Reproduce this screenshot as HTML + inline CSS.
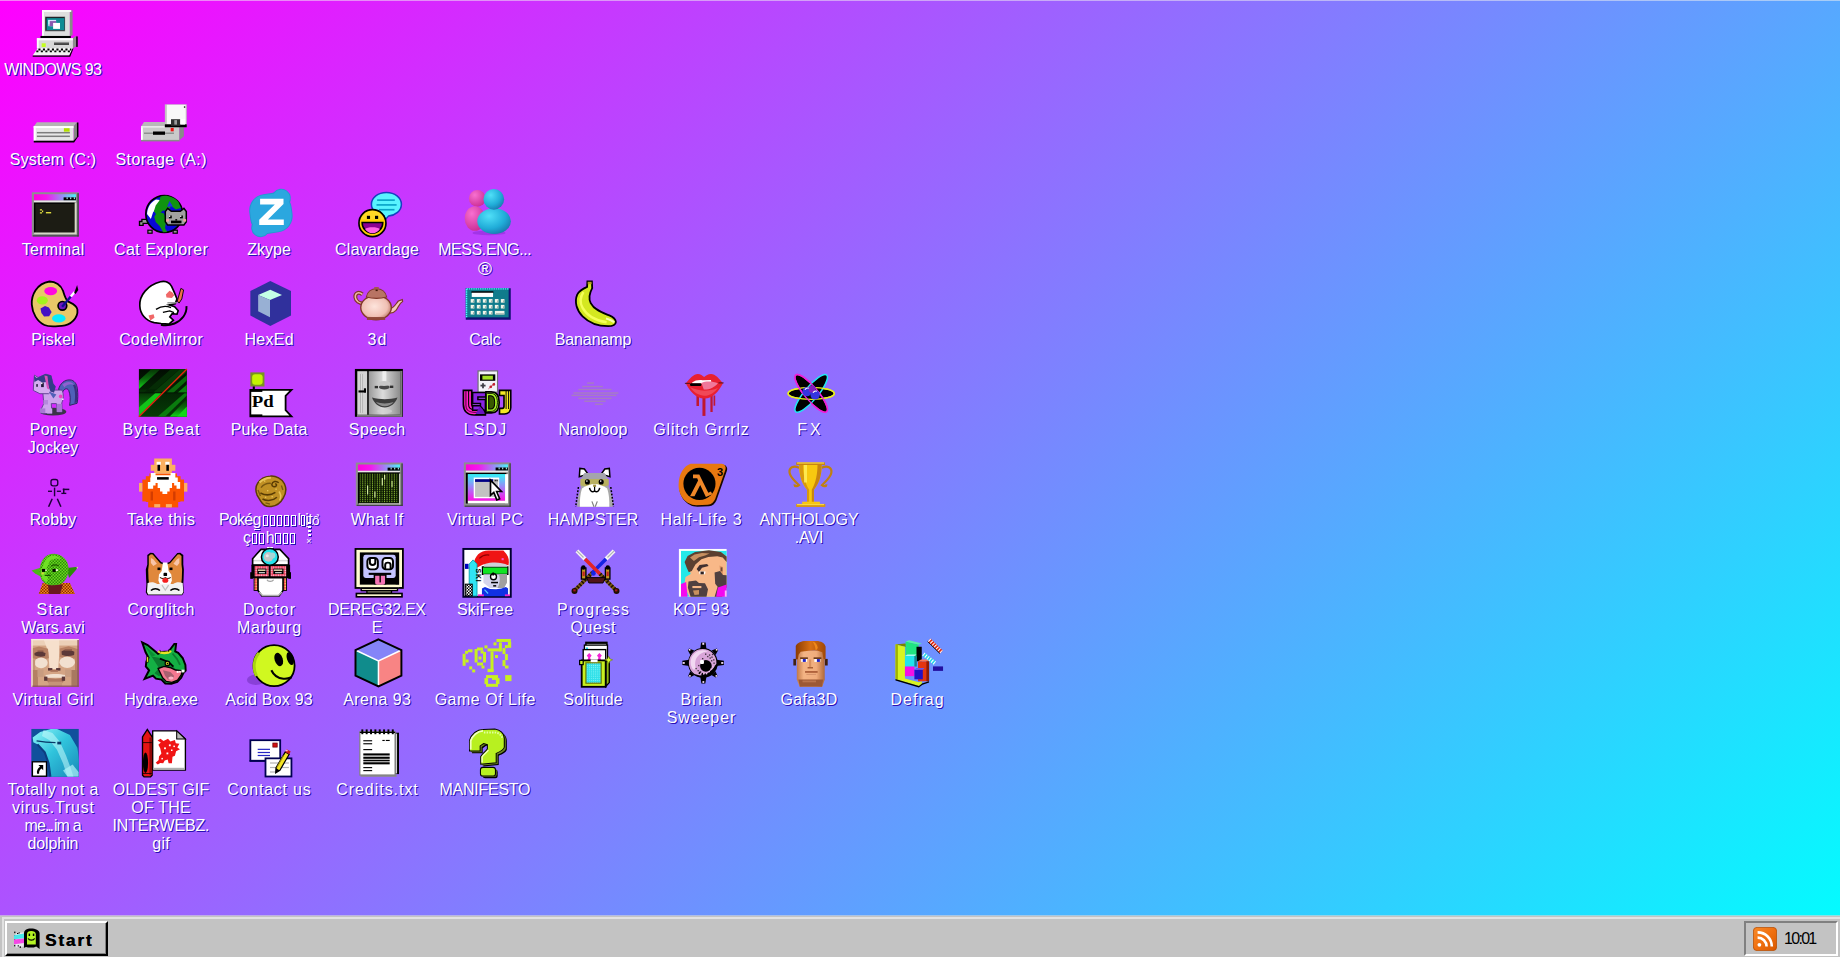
<!DOCTYPE html><html><head><meta charset="utf-8"><title>WINDOWS 93</title><style>

*{margin:0;padding:0;box-sizing:border-box}
html,body{width:1840px;height:957px;overflow:hidden;background:#c0c0c0}
body{font-family:"Liberation Sans",sans-serif;position:relative}
#desk{position:absolute;left:0;top:0;width:1840px;height:916px;background:linear-gradient(135deg,#ff00ff 0%,#00ffff 100%) 0 0/1840px 957px no-repeat;overflow:hidden}
#topline{position:absolute;left:0;top:0;width:1840px;height:1px;background:rgba(240,240,240,.52)}
.ic{position:absolute;width:108px;height:90px}
.ic svg{position:absolute;left:30px;top:10px;width:48px;height:48px;overflow:visible}
.ic .t{position:absolute;left:-21px;width:148px;top:61px;text-align:center;color:#fff;font-size:16px;line-height:18px;white-space:nowrap;text-shadow:1px 1px 0 #2a10b4}
.ic .t span.l{display:block;height:18px}
.z{letter-spacing:0}
.bx{display:inline-block;border:1px solid #fff;box-shadow:1px 1px 0 #2a10b4, inset 1px 1px 0 #2a10b4;vertical-align:-1px}
.u{position:relative}.u:after{content:'';position:absolute;left:1px;right:1px;bottom:-2px;height:1px;background:#fff;box-shadow:1px 1px 0 #2a10b4}.zs{position:absolute;left:112px;top:11px;width:5px}.zs i{display:block;width:3px;height:2px;margin:0 0 2px 1px;background:#fff;box-shadow:1px 1px 0 #2a10b4}.zs b{display:block;font-size:9px;line-height:7px;font-weight:normal;margin-left:-1px}
#bar{position:absolute;left:0;top:915px;width:1840px;height:42px;background:linear-gradient(#c3c3c3,#c3c3c3) 0 1px/100% 41px no-repeat}
#bar .l1{position:absolute;left:0;top:0;width:1840px;height:1px;background:rgba(214,214,214,.62)}
#bar .l2{position:absolute;left:2px;top:2px;width:1838px;height:2px;background:#e2e2e2}
#bar .l3{position:absolute;left:2px;top:2px;width:2px;height:40px;background:#e2e2e2}
#start{position:absolute;left:5px;top:6px;width:103px;height:35px;background:#c3c3c3;border-style:solid;border-width:2px;border-color:#fff #000 #000 #fff;box-shadow:inset -1px -1px 0 #808080}
#start svg{position:absolute;left:6px;top:4px;width:28px;height:24px}
#start b{text-shadow:.5px 0 0 #000;position:absolute;left:38px;top:8px;font-size:17px;line-height:20px;color:#000;letter-spacing:1.9px;font-weight:bold}
#tray{position:absolute;left:1744px;top:6px;width:94px;height:35px;border-style:solid;border-width:2px;border-color:#808080 #fff #fff #808080}
#tray svg{position:absolute;left:7px;top:4px;width:24px;height:24px}
#tray span{position:absolute;left:38px;top:7px;font-size:16px;line-height:18px;color:#000;letter-spacing:-1.7px}

</style></head><body>
<div id="desk">
<div class="ic" style="left:0px;top:0px"><svg viewBox="0 0 32 32"><polygon points="26.3,1 28.4,0 28.4,16.6 26.3,17.6" fill="#8a8a8a"/><rect x="8" y="0.3" width="18.5" height="17.2" fill="#dedede"/><rect x="8" y="0" width="19.5" height="1.3" fill="#fafafa"/><rect x="8" y="0.3" width="1.3" height="17" fill="#fafafa"/><rect x="10" y="4.4" width="13.4" height="9.8" fill="#6a6a6a"/><rect x="10.4" y="4.8" width="12.6" height="8.8" fill="#101018"/><rect x="11" y="5.4" width="11.9" height="8" fill="#0e8c94"/><rect x="12.2" y="6.6" width="5.2" height="4.2" fill="#d6e2ff"/><rect x="13" y="7.4" width="4.4" height="3.4" fill="#8a5ab0"/><rect x="15.4" y="8.6" width="4.6" height="4" fill="#ffffff"/><rect x="12.2" y="6.6" width="0.8" height="3" fill="#bff"/><rect x="7" y="17.3" width="20.2" height="1.5" fill="#000"/><polygon points="28.6,18.8 30.8,17.2 30.8,24.2 28.6,25.6" fill="#8c8c8c"/><rect x="30.8" y="17.6" width="1" height="7" fill="#000"/><rect x="4.6" y="18.8" width="24" height="6.8" fill="#d8d8d8"/><rect x="4.6" y="18.8" width="24" height="1.4" fill="#fbfbfb"/><rect x="4.6" y="18.8" width="1.2" height="6.8" fill="#fbfbfb"/><rect x="7.8" y="22.2" width="2.7" height="2.5" fill="#c4ff20"/><rect x="16" y="21.3" width="10" height="0.9" fill="#909090"/><rect x="16" y="22.2" width="10" height="1" fill="#202020"/><polygon points="5.2,25.4 28.4,25.4 26.2,30.4 1.8,30.4" fill="#f2f2f2"/><path d="M5.6 26.3H27.6" stroke="#000" stroke-width="1.3" stroke-dasharray="1.4 1.6"/><path d="M4.2 27.6H26.6" stroke="#000" stroke-width="1.2" stroke-dasharray="1.4 1.6"/><polygon points="1.8,30.4 26.2,30.4 28.4,25.6 29,25.6 26.8,31.1 1.8,31.1" fill="#000"/></svg><div class="t"><span class="l"><span id="L0_0" style="letter-spacing:-0.60px;margin-right:0.60px">WINDOWS 93</span></span></div></div>
<div class="ic" style="left:0px;top:90px"><svg viewBox="0 0 32 32"><polygon points="4.6,14.9 31.4,14.9 29,17.6 2.5,17.6" fill="#b4b4b4"/><polygon points="29,17.6 31.4,14.9 31.4,24.6 29,27.2" fill="#868686"/><rect x="31.3" y="15" width="1" height="9.6" fill="#000"/><rect x="2.5" y="17.4" width="26.5" height="9.8" fill="#e6e6e6"/><rect x="2.5" y="17.4" width="26.5" height="1.3" fill="#fff"/><rect x="2.5" y="17.4" width="1.3" height="9.8" fill="#fff"/><rect x="4.6" y="21.3" width="22" height="1" fill="#7c7c7c"/><rect x="4.6" y="23.7" width="22" height="1" fill="#7c7c7c"/><rect x="22.6" y="18.8" width="3.8" height="2.3" fill="#b4e000"/><polygon points="2.5,27.2 29,27.2 31.6,24.4 32.2,24.4 29.4,28.4 2.5,28.4" fill="#000"/></svg><div class="t"><span class="l"><span id="L1_0" style="letter-spacing:0.19px;margin-right:-0.19px">System (C:)</span></span></div></div>
<div class="ic" style="left:108px;top:90px"><svg viewBox="0 0 32 32"><polygon points="4,14.6 19,14.6 19,17.6 2,17.6" fill="#b8b8b8"/><rect x="2" y="17.4" width="25.6" height="9.4" fill="#cacaca"/><rect x="2" y="17.4" width="1.2" height="9.4" fill="#fff"/><rect x="2" y="17.4" width="25.6" height="1" fill="#ececec"/><polygon points="27.6,17.6 30.6,15 30.6,24.2 27.6,26.8" fill="#8a8a8a"/><rect x="2" y="26.6" width="25.8" height="1" fill="#8a8a8a"/><rect x="4" y="21.7" width="20" height="0.9" fill="#8a8a8a"/><rect x="10" y="21" width="8" height="2.2" fill="#000"/><rect x="21.8" y="18.6" width="2" height="2.3" fill="#f01010"/><rect x="17.9" y="2.9" width="14.6" height="15.3" fill="#c4c4c4"/><rect x="19.2" y="3.2" width="12.6" height="13" fill="#f8f8f8"/><rect x="17.9" y="16.2" width="14.6" height="2" fill="#000"/><rect x="22" y="12.8" width="6.2" height="4.4" fill="#303030"/><rect x="24.2" y="13.4" width="1.8" height="3" fill="#9a9a9a"/><rect x="28.2" y="12.8" width="3.2" height="3.6" fill="#fff"/><rect x="30.6" y="4.2" width="0.9" height="1" fill="#222"/></svg><div class="t"><span class="l"><span id="L2_0" style="letter-spacing:0.44px;margin-right:-0.44px">Storage (A:)</span></span></div></div>
<div class="ic" style="left:0px;top:180px"><svg viewBox="0 0 32 32"><defs><linearGradient id="tg_terminal" x1="0" x2="1" y1="0" y2="0"><stop offset="0" stop-color="#ff00e0"/><stop offset=".3" stop-color="#f418ee"/><stop offset="1" stop-color="#48f4fa"/></linearGradient></defs><rect x="1.2" y="1.5" width="31.3" height="29.5" fill="#8e8e8e"/><rect x="31.6" y="2.1" width="0.9" height="28.9" fill="#3c3c44"/><rect x="1.8" y="30.2" width="30.6" height="0.8" fill="#3c3c44"/><rect x="2.6" y="2.8" width="28" height="4.2" fill="url(#tg_terminal)"/><rect x="22.4" y="4.9" width="8.2" height="2.1" fill="#000"/><rect x="24.4" y="4.9" width="0.7" height="1.2" fill="#bff"/><rect x="26.8" y="4.9" width="0.7" height="1.2" fill="#bff"/><rect x="29.2" y="4.9" width="0.7" height="1.2" fill="#bff"/><rect x="2.6" y="7.0" width="28" height="1.1" fill="#e8e8e8"/><rect x="2.6" y="8.4" width="28.4" height="21" fill="#c4c4b8"/><rect x="2.6" y="8.4" width="27.2" height="20" fill="#000"/><rect x="3.6" y="9.2" width="26.2" height="19" fill="#1c1c14"/><rect x="29.8" y="9" width="1" height="20.4" fill="#d8d8c8"/><rect x="3" y="28.4" width="27.8" height="1" fill="#d8d8c8"/><path d="M6.6 12.8h1.4v.8h.8v1.2h-.8v.8H6.6v-.8H8v-1.2H6.6z" fill="#e8e440"/><rect x="10.6" y="14.7" width="3.5" height="0.9" fill="#e8e440"/></svg><div class="t"><span class="l"><span id="L3_0" style="letter-spacing:0.30px;margin-right:-0.30px">Terminal</span></span></div></div>
<div class="ic" style="left:108px;top:180px"><svg viewBox="0 0 32 32"><path d="M6.4 19.6H2.6v1.4H1v2.6h2.4v-1.4h3z" fill="#9a9a9a" stroke="#000" stroke-width="0.9"/><rect x="6.6" y="26.8" width="2.8" height="2" fill="#9a9a9a" stroke="#000" stroke-width="0.8"/><rect x="23.4" y="26.8" width="2.8" height="2" fill="#9a9a9a" stroke="#000" stroke-width="0.8"/><circle cx="17.5" cy="16" r="12.3" fill="#0808d8" stroke="#000" stroke-width="1.1"/><path d="M12 6.4C8 8.4 6.4 12 6 16l2.6 3.4 1.4-4.4 2.8-3.8 1.8-4.6z" fill="#fff"/><path d="M15 4.4c4-1.4 9 .2 12 3.6l1.6 4-3.4 1-3-2.4-2.4 3.4-3.2-.4-3.8 3.6-2.2-3 1.2-3.8 2.6-3.6z" fill="#109410"/><path d="M13 14.4l4.2 1.2 1.8 4-1 5.8 1.4 2.6-2.6.2-2.4-4.2-2.6-2.6-1-3.6z" fill="#109410"/><path d="M19.4 11.2l1.6-3.8 2.2 3.4z" fill="#2030e0"/><path d="M18.2 14.4l1.6-2.2 2.4 2h6l2.4-2 1.6 2.2v6.8l-1.6 2.2H19.8l-1.6-2.2z" fill="#a0a0a0" stroke="#000" stroke-width="1"/><rect x="20.6" y="17" width="1.9" height="1.9" fill="#000"/><rect x="20.6" y="17" width="0.9" height="0.9" fill="#fff"/><rect x="28" y="17" width="1.9" height="1.9" fill="#000"/><rect x="28" y="17" width="0.9" height="0.9" fill="#fff"/><rect x="18.8" y="19.4" width="1.9" height="1.6" fill="#f8a0a0"/><rect x="30.2" y="19.4" width="1.9" height="1.6" fill="#f8a0a0"/><path d="M22 20.4h7v1.8H22z" fill="#000"/><rect x="24.9" y="19.4" width="1.2" height="1" fill="#000"/></svg><div class="t"><span class="l"><span id="L4_0" style="letter-spacing:0.47px;margin-right:-0.47px">Cat Explorer</span></span></div></div>
<div class="ic" style="left:216px;top:180px"><svg viewBox="0 0 32 32"><g transform="rotate(-8 16.6 15.4)"><rect x="2.4" y="2.2" width="28.4" height="26.6" fill="#2497d0" rx="11"/><circle cx="24.8" cy="6.6" r="6.4" fill="#2497d0"/><circle cx="8.4" cy="24.2" r="6.2" fill="#2497d0"/><rect x="3" y="2.8" width="27.2" height="25.4" fill="#2ba7df" rx="10.4"/><circle cx="24.8" cy="6.6" r="5.8" fill="#2ba7df"/><circle cx="8.4" cy="24.2" r="5.6" fill="#2ba7df"/></g><path d="M9.4 5.8H25v3.6L14.6 19.6H25.2v3.8H8.8v-3.6L19.2 9.6H9.4z" fill="#fff"/></svg><div class="t"><span class="l"><span id="L5_0" style="letter-spacing:0.00px;margin-right:-0.00px">Zkype</span></span></div></div>
<div class="ic" style="left:324px;top:180px"><svg viewBox="0 0 32 32"><path d="M21.6 1.6c5.6 0 10 3.4 10 7.9s-4 7.4-8.6 7.9L19.6 21l.4-3.8c-4.6-.8-8.4-3.6-8.4-7.7 0-4.5 4.4-7.9 10-7.9z" fill="#58f4ff" stroke="#1840c0" stroke-width="1"/><rect x="15.4" y="6.2" width="11.8" height="1.1" fill="#08a4c8"/><rect x="15" y="9.4" width="13.4" height="1.1" fill="#08a4c8"/><rect x="16.6" y="12.6" width="10.4" height="1.1" fill="#08a4c8"/><circle cx="12.3" cy="22.1" r="9" fill="#ffd000" stroke="#000" stroke-width="1.1"/><path d="M4.6 19.6a8 8 0 0 1 15.4 0z" fill="#ffe040" opacity=".6"/><rect x="8.6" y="17.2" width="2.1" height="2.1" fill="#000"/><rect x="14" y="17.2" width="2.1" height="2.1" fill="#000"/><path d="M5.4 21.6h13.8c0 4-3 7.2-6.9 7.2s-6.9-3.2-6.9-7.2z" fill="#8a0090" stroke="#000" stroke-width="1"/><path d="M7.4 26c1.4-1.6 8.4-1.6 9.8 0-1 1.8-2.8 2.8-4.9 2.8s-3.9-1-4.9-2.8z" fill="#ff62e4"/></svg><div class="t"><span class="l"><span id="L6_0" style="letter-spacing:0.22px;margin-right:-0.22px">Clavardage</span></span></div></div>
<div class="ic" style="left:432px;top:180px"><svg viewBox="0 0 32 32"><defs><radialGradient id="mp" cx=".35" cy=".3" r=".8"><stop offset="0" stop-color="#f870d0"/><stop offset="1" stop-color="#c82890"/></radialGradient><radialGradient id="mb" cx=".35" cy=".3" r=".8"><stop offset="0" stop-color="#50e0f8"/><stop offset=".6" stop-color="#20acd8"/><stop offset="1" stop-color="#1870a8"/></radialGradient></defs><ellipse cx="18" cy="28.6" rx="11" ry="1.6" fill="#5010a0" opacity=".25"/><circle cx="10.2" cy="5.6" r="5.6" fill="url(#mp)"/><ellipse cx="8.6" cy="19" rx="6.8" ry="8.2" fill="url(#mp)"/><ellipse cx="21.4" cy="20.8" rx="11.2" ry="8.6" fill="url(#mb)"/><circle cx="21.2" cy="6.2" r="6.9" fill="url(#mb)"/></svg><div class="t"><span class="l"><span id="L7_0" style="letter-spacing:-0.42px;margin-right:0.42px">MESS.ENG...</span></span><span class="l"><span id="L7_1"><span style="font-size:19px;line-height:18px;position:relative;top:1px">®</span></span></span></div></div>
<div class="ic" style="left:0px;top:270px"><svg viewBox="0 0 32 32"><path d="M13 1c4 0 7.6 2.4 9 6.2.8 2.4 1.4 5.4 3.4 7.2 2.4 1.2 5.8 2.2 6.2 5.4.6 5.4-4.4 10.6-10.4 10.8-4 .2-8.2 1-11.6-.6C4.6 27.6 1.6 22 1.2 16.400000000000002.8 10 4.4 2.4 13 1z" fill="#e8c868" stroke="#000" stroke-width="1.2"/><ellipse cx="13.8" cy="7.4" rx="4.3" ry="2.8" fill="#ff08e0"/><ellipse cx="8.2" cy="13.6" rx="3.7" ry="2.7" fill="#a4f41c"/><path d="M7 19l3-1.6 2.6 1 1.8 3-1.600000000000001 2.8-3.400000000000002.2L7.6 22z" fill="#4410c4"/><ellipse cx="19.2" cy="25.6" rx="4.5" ry="2.8" fill="#08ecfc"/><circle cx="21.6" cy="17.2" r="2.9" fill="#7018c0" stroke="#000" stroke-width="1.1"/><line x1="21.4" y1="17.8" x2="27.2" y2="11" stroke="#101090" stroke-width="1.6"/><line x1="27.2" y1="11" x2="29.8" y2="8" stroke="#fff" stroke-width="1.6"/><path d="M29.4 8.6L31.4 3.4 32.2 6.6 30.4 9.4z" fill="#000"/></svg><div class="t"><span class="l"><span id="L8_0" style="letter-spacing:0.18px;margin-right:-0.18px">Piskel</span></span></div></div>
<div class="ic" style="left:108px;top:270px"><svg viewBox="0 0 32 32"><path d="M32.3 17.4c.4 5-3 9.6-8 11.6-3 1.200000000000001-6.4 1.400000000000002-9 .8" fill="none" stroke="#000" stroke-width="1.3"/><path d="M15 1.2c3-.8 6 .4 7.4 3l1.600000000000001 3.6 2 4.800000000000001-1.200000000000001 3.2-4 .8 3.6 1.2 2.4 2.6-.8 2.4-3.2-.4-1.6 2.2 2.4 2.2-3 2.6-5.2-.4-4.6-.6C5 27.2 1.4 22.6 1.2 17.2.8 10.2 6.4 3.4 15 1.2z" fill="#fff" stroke="#000" stroke-width="1.1"/><path d="M18.6 9.6l2.4-2.4 1.800000000000001 1 1.400000000000002 2-1.600000000000001 1.800000000000001-3.6-.4z" fill="#f06868"/><path d="M28.6 5.6l1.8 1-1.2 6-1.8 2.8-1.200000000000001-1.400000000000002z" fill="#f07048" stroke="#000" stroke-width="0.6"/><path d="M7 23.6l3.4-.8.6 2.4-2.8 1.800000000000001z" fill="#f06868"/><path d="M12 19.6c3-2 7-2.4 10-1.2" fill="none" stroke="#000" stroke-width="0.9"/><path d="M16.6 21.6l4.6-1 2.8 1.2" fill="none" stroke="#000" stroke-width="0.9"/><path d="M19.6 15.2h6.6" fill="none" stroke="#909090" stroke-width="0.9"/></svg><div class="t"><span class="l"><span id="L9_0" style="letter-spacing:0.41px;margin-right:-0.41px">CodeMirror</span></span></div></div>
<div class="ic" style="left:216px;top:270px"><svg viewBox="0 0 32 32"><polygon points="16.2,0.6 30,7.4 30,23.7 16.2,30.6 2.9,23.7 2.9,7.4" fill="#30309c"/><polygon points="8.1,10 16.2,6.5 24,10 16,13.4" fill="#c4ffe6"/><polygon points="8.1,10 16,13.4 16,24.8 8.1,20.8" fill="#98b0d4"/></svg><div class="t"><span class="l"><span id="L10_0" style="letter-spacing:0.30px;margin-right:-0.30px">HexEd</span></span></div></div>
<div class="ic" style="left:324px;top:270px"><svg viewBox="0 0 32 32"><defs><radialGradient id="tp" cx=".45" cy=".45" r=".6"><stop offset="0" stop-color="#fde4dc"/><stop offset=".7" stop-color="#f0c0b4"/><stop offset="1" stop-color="#b87060"/></radialGradient></defs><path d="M5.6 9.6C2.8 7.4.6 9 .9 11.6c.3 2.4 2.6 4 5.3 4" fill="none" stroke="#803828" stroke-width="2.6"/><path d="M5.6 9.6C2.8 7.4.6 9 .9 11.6c.3 2.4 2.6 4 5.3 4" fill="none" stroke="#f0b8a8" stroke-width="1"/><path d="M23.6 19.4c3-.6 4.2-3.4 6-5.4l2.6-.9.2 1.2c-2.2 1-2.8 4-4.4 6-1.4 1.6-3 2-4.8 1.8z" fill="#f4c8bc" stroke="#803828" stroke-width="0.8"/><ellipse cx="14.7" cy="18.4" rx="10.2" ry="8.1" fill="url(#tp)" stroke="#803828" stroke-width="0.9"/><rect x="8.6" y="24.7" width="12.2" height="1.9" fill="#904838"/><path d="M8.2 11.4c.6-3.600000000000001 3.4-5.6 6.8-5.6s6.2 2 6.8 5.6c-4 1-9.6 1-13.6 0z" fill="#b87464" stroke="#803828" stroke-width="0.7"/><rect x="13.5" y="4.7" width="3" height="2" fill="#a05848"/><rect x="14.4" y="6.4" width="1.4" height="1" fill="#401808"/></svg><div class="t"><span class="l"><span id="L11_0" style="letter-spacing:1.10px;margin-right:-1.10px">3d</span></span></div></div>
<div class="ic" style="left:432px;top:270px"><svg viewBox="0 0 32 32"><rect x="2.5" y="5.5" width="30" height="21" fill="#101070"/><rect x="2.5" y="5.5" width="28.6" height="19.4" fill="#107c8c"/><path d="M3 5.9H31" stroke="#48f4ff" stroke-width=".9" stroke-dasharray="1 .5"/><path d="M3 6V24.8" stroke="#48f4ff" stroke-width="1" stroke-dasharray="1 .5"/><rect x="6.3" y="7.5" width="14.6" height="1.2" fill="#000"/><rect x="6.5" y="8.5" width="14.2" height="2.8" fill="#fff"/><rect x="5.8" y="12.7" width="2.4" height="2.4" fill="#eef4e8"/><rect x="7.3" y="13.6" width="0.9" height="1.5" fill="#9ab0a8"/><rect x="9.9" y="12.7" width="2.4" height="2.4" fill="#eef4e8"/><rect x="11.4" y="13.6" width="0.9" height="1.5" fill="#9ab0a8"/><rect x="13.9" y="12.7" width="2.4" height="2.4" fill="#eef4e8"/><rect x="15.4" y="13.6" width="0.9" height="1.5" fill="#9ab0a8"/><rect x="17.9" y="12.7" width="2.4" height="2.4" fill="#eef4e8"/><rect x="19.4" y="13.6" width="0.9" height="1.5" fill="#9ab0a8"/><rect x="21.9" y="12.7" width="2.4" height="2.4" fill="#eef4e8"/><rect x="23.4" y="13.6" width="0.9" height="1.5" fill="#9ab0a8"/><rect x="25.9" y="12.7" width="2.4" height="2.4" fill="#eef4e8"/><rect x="27.4" y="13.6" width="0.9" height="1.5" fill="#9ab0a8"/><rect x="5.8" y="16.6" width="2.4" height="2.4" fill="#eef4e8"/><rect x="7.3" y="17.5" width="0.9" height="1.5" fill="#9ab0a8"/><rect x="9.9" y="16.6" width="2.4" height="2.4" fill="#eef4e8"/><rect x="11.4" y="17.5" width="0.9" height="1.5" fill="#9ab0a8"/><rect x="13.9" y="16.6" width="2.4" height="2.4" fill="#eef4e8"/><rect x="15.4" y="17.5" width="0.9" height="1.5" fill="#9ab0a8"/><rect x="17.9" y="16.6" width="2.4" height="2.4" fill="#eef4e8"/><rect x="19.4" y="17.5" width="0.9" height="1.5" fill="#9ab0a8"/><rect x="21.9" y="16.6" width="2.4" height="2.4" fill="#eef4e8"/><rect x="23.4" y="17.5" width="0.9" height="1.5" fill="#9ab0a8"/><rect x="25.9" y="16.6" width="2.4" height="2.4" fill="#eef4e8"/><rect x="27.4" y="17.5" width="0.9" height="1.5" fill="#9ab0a8"/><rect x="5.8" y="20.6" width="2.4" height="2.4" fill="#eef4e8"/><rect x="7.3" y="21.5" width="0.9" height="1.5" fill="#9ab0a8"/><rect x="9.9" y="20.6" width="2.4" height="2.4" fill="#eef4e8"/><rect x="11.4" y="21.5" width="0.9" height="1.5" fill="#9ab0a8"/><rect x="13.9" y="20.6" width="2.4" height="2.4" fill="#eef4e8"/><rect x="15.4" y="21.5" width="0.9" height="1.5" fill="#9ab0a8"/><rect x="17.9" y="20.6" width="2.4" height="2.4" fill="#eef4e8"/><rect x="19.4" y="21.5" width="0.9" height="1.5" fill="#9ab0a8"/><rect x="21.9" y="20.6" width="6.4" height="2.4" fill="#eef4e8"/><rect x="22.6" y="22.2" width="5.7" height="0.8" fill="#9ab0a8"/></svg><div class="t"><span class="l"><span id="L12_0" style="letter-spacing:-0.17px;margin-right:0.17px">Calc</span></span></div></div>
<div class="ic" style="left:540px;top:270px"><svg viewBox="0 0 32 32"><path d="M11.6 1h3l.2 4.4c-1.600000000000001 3-2.6 6.8-1 10 2.4 4.6 8 6.4 12.4 8.2 2.2 1 4.2 2.2 4.4 4.4-.2 2-2.4 2.8-5.2 2.8-6 0-12.6-2.2-17-6.6C4.4 20.2 2.8 14.6 4.8 9.8c1.200000000000001-2.4 3.8-4 6.6-5.200000000000001z" fill="#d4e820" stroke="#000" stroke-width="1.2"/><path d="M9 8c-2 3-2.6 7-.6 10.6 3 5.4 9.6 8.6 16 9.6" fill="none" stroke="#f4ff58" stroke-width="1.6"/><path d="M24 25.6c2 .6 4 1.200000000000001 5.4 2.6" fill="none" stroke="#f8ffb0" stroke-width="1.4"/><rect x="11.8" y="1.2" width="2.6" height="1.6" fill="#b8a020"/></svg><div class="t"><span class="l"><span id="L13_0" style="letter-spacing:-0.09px;margin-right:0.09px">Bananamp</span></span></div></div>
<div class="ic" style="left:0px;top:360px"><svg viewBox="0 0 32 32"><ellipse cx="15.4" cy="27.8" rx="8.8" ry="2.6" fill="#3c3448"/><path d="M19 13c1-4 4-6.6 7.6-6.4 3 .2 4.6 2.6 5 6 .4 3.4.4 6.6-.2 9.6l-5 1.4c.6-3.4.6-7.2-.6-10-1-1.800000000000001-3-1.200000000000001-4 1z" fill="#5060b8" stroke="#282058" stroke-width="0.6"/><path d="M21.6 9.6c2.4-2 6-2.4 8 .4-2.4-1-5.2-.4-6.6 1.600000000000001z" fill="#9060d0"/><path d="M28.6 10c1.600000000000001 3 1.800000000000001 8 1 12l1.6-.4c.6-4 .4-8.600000000000001-1-12z" fill="#383080"/><path d="M8.4 13.4h13c1.200000000000001 2.6 1 6-.2 8.6l.2 6h-3.2l-.6-5.6h-3.4L14.6 29H7.4l.2-3.2 1.600000000000001-3.4z" fill="#cca4ec" stroke="#5c3c90" stroke-width="0.6"/><rect x="6.6" y="25.6" width="3.6" height="3" fill="#a878d4"/><rect x="11.4" y="25.6" width="3.4" height="3.4" fill="#cca4ec"/><rect x="17.8" y="22.6" width="3.4" height="5.4" fill="#a878d4"/><rect x="9" y="20" width="3" height="3" fill="#b488dc"/><path d="M2.4 9.4L3 3.4l2.4 1.6 5.2-2.2 3.4 1 1.2 4.8-.2 5-2.6 2.2H6.6L2.2 13.6z" fill="#d4acf0" stroke="#5c3c90" stroke-width="0.6"/><path d="M2.6 4l2 1.4 5.6-2.8 4 1 1.200000000000001 5.2 1.8 2.2-1.200000000000001 4.2-2.4-1-2.4-6.2-3 .4L5.4 6.6 3 8z" fill="#343c88"/><path d="M9.6 3.6l1.8 8.8 1.4.6-1.2-9z" fill="#d850b8"/><rect x="7.4" y="8.4" width="1.8" height="3" fill="#201838"/><rect x="7.4" y="8.4" width="0.9" height="1" fill="#fff"/><rect x="4.2" y="9.4" width="1" height="1.8" fill="#201838"/><circle cx="20.4" cy="17.6" r="1.2" fill="#f040c0"/><rect x="21.4" y="19" width="1" height="1" fill="#f8f0ff"/><path d="M12.6 14.4l3 4.6 2-2.6z" fill="#5060b8"/></svg><div class="t"><span class="l"><span id="L14_0" style="letter-spacing:0.30px;margin-right:-0.30px">Poney</span></span><span class="l"><span id="L14_1" style="letter-spacing:0.12px;margin-right:-0.12px">Jockey</span></span></div></div>
<div class="ic" style="left:108px;top:360px"><svg viewBox="0 0 32 32"><defs><linearGradient id="bb1" x1="0" y1="0" x2="0" y2="1"><stop offset="0" stop-color="#063406"/><stop offset=".5" stop-color="#0a6c0c"/><stop offset="1" stop-color="#10d418"/></linearGradient><linearGradient id="bb2" x1="0" y1="0" x2="0" y2="1"><stop offset="0" stop-color="#020c02"/><stop offset="1" stop-color="#053c06"/></linearGradient><clipPath id="bbc"><rect x=".6" y="-.6" width="32" height="31.8"/></clipPath></defs><rect x="0.6" y="-0.6" width="32" height="31.8" fill="url(#bb2)"/><g clip-path="url(#bbc)"><polygon points="0.6,7 9,-0.6 15,-0.6 0.6,12.6" fill="url(#bb1)"/><polygon points="0.6,15.2 4,15.2 22,-0.6 28,-0.6 12,13 0.6,13" fill="#052c05"/><polygon points="10,15.2 16,15.2 32.6,1.4 32.6,-0.6 28,-0.6" fill="#083c08"/><polygon points="0.6,31.2 0.6,15.4 15.6,15.4 8,22 0.6,28.6" fill="url(#bb1)"/><polygon points="0.6,31.2 0.6,25 11.6,15.4 15.8,15.4" fill="#11c418"/><polygon points="13,31.2 32.6,14 32.6,17 18,31.2" fill="#0a7c0e"/><polygon points="21,31.2 32.6,19.4 32.6,31.2" fill="url(#bb1)"/><polygon points="26,31.2 32.6,24.4 32.6,31.2" fill="#12d81a"/><polygon points="19,15.2 32.6,3.4 32.6,7 23.6,15.2" fill="#0a6c0c"/><polygon points="26.4,15.2 32.6,9.6 32.6,15.2" fill="#0c8410"/><rect x="0.6" y="15" width="32" height="0.5" fill="#031003"/></g><line x1="0.6" y1="31.2" x2="32.6" y2="-0.6" stroke="#e82010" stroke-width="0.9"/></svg><div class="t"><span class="l"><span id="L15_0" style="letter-spacing:0.94px;margin-right:-0.94px">Byte Beat</span></span></div></div>
<div class="ic" style="left:216px;top:360px"><svg viewBox="0 0 32 32"><rect x="2.9" y="1.6" width="9.4" height="9.4" fill="#789420"/><rect x="4.1" y="2.8" width="7" height="7" fill="#c4f404" rx="2"/><rect x="4.5" y="11" width="1.4" height="2.6" fill="#000"/><path d="M2.9 13.3H30.3L26.4 17.2v9.6L30.3 30.900000000000002H2.9z" fill="#fff" stroke="#000" stroke-width="1.2"/><rect x="2.9" y="12.9" width="8" height="1.7" fill="#000"/><rect x="2.9" y="29.6" width="8" height="1.7" fill="#000"/><text x="3.8" y="24.8" font-family="Liberation Serif,serif" font-weight="bold" font-size="11" fill="#000" textLength="14.6" lengthAdjust="spacingAndGlyphs">Pd</text></svg><div class="t"><span class="l"><span id="L16_0" style="letter-spacing:0.25px;margin-right:-0.25px">Puke Data</span></span></div></div>
<div class="ic" style="left:324px;top:360px"><svg viewBox="0 0 32 32"><defs><linearGradient id="sf" x1="0" x2="1" y1="0" y2="0"><stop offset="0" stop-color="#9a9a9a"/><stop offset=".45" stop-color="#dcdcdc"/><stop offset="1" stop-color="#8c8c8c"/></linearGradient></defs><rect x="0.6" y="-0.7" width="32" height="31.9" fill="#000"/><rect x="30.8" y="0.6" width="1.4" height="30.4" fill="#7c7c7c"/><rect x="2" y="29.8" width="30" height="1.4" fill="#7c7c7c"/><rect x="2.2" y="0.8" width="6.6" height="29" fill="#d4d4d4"/><rect x="4.2" y="2.6" width="1.6" height="26" fill="#a4a4a4"/><rect x="4.8" y="2.6" width="0.6" height="26" fill="#e8e8e8"/><rect x="3" y="13.6" width="5" height="1.4" fill="#000"/><rect x="6.6" y="12.2" width="1.4" height="2.8" fill="#000"/><rect x="9.8" y="0.8" width="21" height="29" fill="url(#sf)"/><rect x="19" y="0.8" width="2.6" height="9" fill="#f4f4f4" opacity=".8"/><ellipse cx="20.2" cy="11.4" rx="3.6" ry="1.6" fill="#484848"/><rect x="13.8" y="10.6" width="2.2" height="1.6" fill="#303030"/><rect x="24" y="10.4" width="2.2" height="1.6" fill="#303030"/><ellipse cx="20" cy="9" rx="4.2" ry="1.6" fill="#c8c8c8"/><path d="M12 18.4c5 1.4 12 1.4 17 0-1.4 4-4.6 6.6-8.5 6.6s-7.1-2.6-8.5-6.6z" fill="#3c3c3c"/><path d="M14.6 21.4c3.4 1.2 8.4 1.2 11.8 0-1.4 1.800000000000001-3.4 2.8-5.9 2.8s-4.5-1-5.9-2.8z" fill="#8c8c8c"/><ellipse cx="20.4" cy="27.4" rx="5" ry="1.6" fill="#d0d0d0" opacity=".7"/></svg><div class="t"><span class="l"><span id="L17_0" style="letter-spacing:0.42px;margin-right:-0.42px">Speech</span></span></div></div>
<div class="ic" style="left:432px;top:360px"><svg viewBox="0 0 32 32"><rect x="10.7" y="0.6" width="13" height="14.2" fill="#f2f2f8" stroke="#707078" stroke-width="0.8"/><rect x="12" y="2.9" width="10.2" height="4.3" fill="#000"/><rect x="13.6" y="3.8" width="7" height="2.6" fill="#a4e424"/><rect x="12.3" y="9.8" width="3.4" height="1.2" fill="#404048"/><rect x="13.4" y="8.8" width="1.2" height="3.4" fill="#404048"/><circle cx="19.2" cy="11.2" r="0.9" fill="#c02030"/><circle cx="21.2" cy="9.6" r="0.9" fill="#c02030"/><line x1="17.6" y1="12.6" x2="22" y2="8.6" stroke="#c02030" stroke-width="0.5"/><path d="M.9 13.6H6.5V22.6c0 2 1.6 3 3.5 3H15.6V30H8C3.8 30 .9 27.4.9 23z" fill="#ff22c4" stroke="#000" stroke-width="1.1"/><path d="M2.6 14v9.6c0 2.600000000000001 2 4.6 5.4 4.6h7.2" fill="none" stroke="#7a0060" stroke-width="0.9"/><path d="M4.4 14v9.2c0 1.8 1.4 3.2 3.8 3.2h7.200000000000001" fill="none" stroke="#000" stroke-width="0.7"/><path d="M7.1 15H15.8v3H10.6v1.6h5v7.2H7.1v-3h5.2v-1.4h-5.2z" fill="#8a24e4" stroke="#000" stroke-width="1"/><path d="M12 23.8c1.6 1.6 3.6 3.4 3.6 6H8.8" fill="#6a14c0" stroke="#000" stroke-width="0.8"/><path d="M16 14.6h3.6c3.4 0 5.2 2.8 5.2 7s-1.8 7-5.2 7H16z" fill="#a8f424" stroke="#000" stroke-width="1.1"/><path d="M17.8 17.2h1.4c1.6 0 2.6 1.8 2.6 4.4s-1 4.4-2.6 4.4h-1.4z" fill="#3a5a00" stroke="#000" stroke-width="0.7"/><path d="M16.8 15.6h2.6c2.8 0 4.2 2.6 4.2 6s-1.4 6-4.2 6h-2.6" fill="none" stroke="#000" stroke-width="0.6"/><path d="M25 13.6h7.5V25c0 2.6-1.8 4.3-4.200000000000003 4.3H25V25.6h1.8c.8 0 1.2-.6 1.2-1.4V17H25z" fill="#f4e824" stroke="#000" stroke-width="1.1"/><path d="M29.4 14V26" fill="none" stroke="#000" stroke-width="0.6"/><path d="M31 14V26" fill="none" stroke="#000" stroke-width="0.6"/></svg><div class="t"><span class="l"><span id="L18_0" style="letter-spacing:1.10px;margin-right:-1.10px">LSDJ</span></span></div></div>
<div class="ic" style="left:540px;top:360px"><svg viewBox="0 0 32 32"><rect x="11.4" y="8.25" width="4.6" height="0.95" fill="#a88aa8" opacity=".7"/><rect x="8.2" y="10.55" width="13.7" height="0.95" fill="#a88aa8" opacity=".7"/><rect x="5.5" y="12.55" width="22.2" height="0.95" fill="#a88aa8" opacity=".7"/><rect x="2.3" y="14.850000000000001" width="29.999999999999996" height="0.95" fill="#a88aa8" opacity=".7"/><rect x="1" y="16.45" width="30" height="0.95" fill="#a88aa8" opacity=".7"/><rect x="5.5" y="18.45" width="22.2" height="0.95" fill="#a88aa8" opacity=".7"/><rect x="9.5" y="20.35" width="14.3" height="0.95" fill="#a88aa8" opacity=".7"/><rect x="16.6" y="22.35" width="5.299999999999997" height="0.95" fill="#a88aa8" opacity=".7"/></svg><div class="t"><span class="l"><span id="L19_0" style="letter-spacing:0.04px;margin-right:-0.04px">Nanoloop</span></span></div></div>
<div class="ic" style="left:648px;top:360px"><svg viewBox="0 0 32 32"><rect x="12.3" y="17" width="1.7" height="7" fill="#c01830"/><rect x="16.3" y="17" width="2" height="13.6" fill="#c01830"/><rect x="21.6" y="17" width="1.5" height="11" fill="#c01830"/><rect x="23.7" y="17" width="1.1" height="6.8" fill="#c01830"/><path d="M5.2 8.8C8 5.6 10.4 2.6 13.2 2.6c2 0 3 1 4.2 2 1.2-1 2.6-2 4.6-2 3 0 5.2 3 8 6.2-2.6 5-6.6 10.2-12.4 10.2S7.8 14 5.2 8.8z" fill="#e82030"/><path d="M8 11.4c2.6 3.6 6 5.8 9.6 5.8s6.6-2 9-5.2c-3 1.2-6 1.8-9.2 1.8s-6.6-1-9.4-2.4z" fill="#f04858"/><path d="M9.4 8.400000000000001c2-1.6 4.6-2 7-1.600000000000001l5.6-.2.2 2.4H9.6z" fill="#fff"/><path d="M15.6 8.6c3-1.4 7.6-1.2 11 .2-2.4 3-6 4.4-9.4 4.2z" fill="#f0789a"/><rect x="8" y="8.9" width="7.6" height="1.8" fill="#000" rx=".8"/><line x1="4.6" y1="8.9" x2="8" y2="8.9" stroke="#401018" stroke-width="0.6"/><line x1="27" y1="8.6" x2="30.4" y2="8.6" stroke="#401018" stroke-width="0.6"/></svg><div class="t"><span class="l"><span id="L20_0" style="letter-spacing:0.86px;margin-right:-0.86px">Glitch Grrrlz</span></span></div></div>
<div class="ic" style="left:756px;top:360px"><svg viewBox="0 0 32 32"><g transform="translate(16.8 15.6)"><ellipse rx="15.4" ry="4" fill="#000" stroke="#e8f020" stroke-width="1"/><ellipse rx="16" ry="4.4" fill="#000" stroke="#f020d8" stroke-width="1" transform="rotate(50)"/><ellipse rx="16" ry="4.4" fill="#000" stroke="#20e8f4" stroke-width="1" transform="rotate(-50)"/><ellipse rx="15.4" ry="4" fill="none" stroke="#e8f020" stroke-width=".9"/><ellipse rx="16" ry="4.4" fill="none" stroke="#f020d8" stroke-width=".9" transform="rotate(50)"/></g><circle cx="14" cy="14.4" r="3.1" fill="#3434e0"/><circle cx="19.4" cy="16.6" r="3.1" fill="#3434e0"/><circle cx="17.4" cy="12.6" r="2.4" fill="#8020c0"/><path d="M12.6 13.2c.6-1 1.600000000000001-1.4 2.6-1" fill="none" stroke="#fff" stroke-width="0.7"/><path d="M18 15.2c.6-1 1.600000000000001-1.4 2.6-1" fill="none" stroke="#fff" stroke-width="0.7"/></svg><div class="t"><span class="l"><span id="L21_0" style="letter-spacing:2.90px;margin-right:-2.90px">FX</span></span></div></div>
<div class="ic" style="left:0px;top:450px"><svg viewBox="0 0 32 32"><rect x="14" y="13" width="4.5" height="4.2" fill="none" stroke="#1c0038" stroke-width="0.9" rx="1.4"/><rect x="15.9" y="18.4" width="0.95" height="5.8" fill="#1c0038"/><rect x="12" y="20.4" width="2.7" height="0.9" fill="#1c0038"/><rect x="17.9" y="20.4" width="2.7" height="0.9" fill="#1c0038"/><rect x="21.8" y="19.1" width="4.4" height="1" fill="#1c0038"/><rect x="22" y="19.1" width="1" height="3.4" fill="#1c0038"/><rect x="20.9" y="21.8" width="3.3" height="0.9" fill="#1c0038"/><line x1="14.8" y1="25.8" x2="12.4" y2="31.2" stroke="#1c0038" stroke-width="1"/><line x1="18.2" y1="25.8" x2="20.6" y2="31.2" stroke="#1c0038" stroke-width="1"/></svg><div class="t"><span class="l"><span id="L22_0" style="letter-spacing:0.05px;margin-right:-0.05px">Robby</span></span></div></div>
<div class="ic" style="left:108px;top:450px"><svg viewBox="0 0 32 32"><rect x="2.9" y="13" width="27.8" height="14.6" fill="#fc5400"/><rect x="5.2" y="10.8" width="23.2" height="4" fill="#fc5400"/><rect x="7.6" y="9" width="18.4" height="3" fill="#fc5400"/><rect x="6.8" y="27.2" width="20" height="4.4" fill="#fc5400"/><rect x="5.2" y="25" width="3" height="3" fill="#fc5400"/><rect x="25.2" y="25" width="3" height="3" fill="#fc5400"/><rect x="0.7" y="15.3" width="2.2" height="5.8" fill="#fcb060"/><rect x="30.7" y="15.3" width="2.2" height="5.8" fill="#fcb060"/><rect x="8.4" y="21" width="1.6" height="6" fill="#d43c00"/><rect x="23.4" y="21" width="1.6" height="6" fill="#d43c00"/><rect x="10.8" y="29.4" width="4" height="2.2" fill="#fcb060"/><rect x="18.6" y="29.4" width="4" height="2.2" fill="#fcb060"/><rect x="10.8" y="-1" width="11.8" height="10.2" fill="#fcb060"/><rect x="8.5" y="3.2" width="16.4" height="4" fill="#fcb060"/><rect x="12.4" y="1.2" width="2.8" height="2" fill="#fff"/><rect x="18.2" y="1.2" width="2.8" height="2" fill="#fff"/><rect x="13" y="3.2" width="1.7" height="4" fill="#000"/><rect x="18.9" y="3.2" width="1.7" height="4" fill="#000"/><path d="M8.5 8.6h3.2v1.5h10V8.6h3.2v3h1.6v3h1.6v4.600000000000001h-2.4v-2.2h-1.6v-1.6h-1.4v3.2h-1.6V21h-1.6v1.6h-3.2V21h-1.600000000000001v-2.4h-1.6v-3.2h-1.4V17h-1.6v2.2H6.6V14.600000000000001h1.6V11.6h.3z" fill="#fff"/><rect x="12.7" y="11.4" width="7.8" height="1.7" fill="#000"/></svg><div class="t"><span class="l"><span id="L23_0" style="letter-spacing:0.62px;margin-right:-0.62px">Take this</span></span></div></div>
<div class="ic" style="left:216px;top:450px"><svg viewBox="0 0 32 32"><path d="M16 10.8c4-.4 8 1.600000000000001 9.6 5 1.4 3 1 6.8-.8 9.600000000000001-1.6 3-4.6 5.2-8 5.6-3 .4-5.6-1.200000000000001-7-3.6l-2.4-4c-1-2.6-1.2-5.6.4-8 1.8-2.8 5-4.4 8.2-4.6z" fill="#c09024" stroke="#5a3c04" stroke-width="1"/><path d="M9 15c2-2 4.6-3.2 7.6-3.2" fill="none" stroke="#e8c458" stroke-width="1.3"/><path d="M21.8 15.2c-1.600000000000001-1.600000000000001-4.2-1-4.600000000000001 1 0 1.6 2 2.2 3 1 .4-.6 0-1.4-.8-1.2" fill="none" stroke="#5a3c04" stroke-width="1"/><path d="M9.6 22c3 1.6 7 1.6 10-.4" fill="none" stroke="#5a3c04" stroke-width="1.1"/><path d="M11 26c3 1.6 7 1.2 9.6-1.200000000000001" fill="none" stroke="#5a3c04" stroke-width="1"/><path d="M10 18.4c1.600000000000001-2 4-3 6.6-2.8" fill="none" stroke="#7a5810" stroke-width="1"/><path d="M22 21c1.200000000000001 1.6 1.400000000000002 4 .4 6" fill="none" stroke="#e8c458" stroke-width="1"/><path d="M8 20l1.6 4M13 28.6l3 .8M23.6 17l1 3" fill="none" stroke="#7a5810" stroke-width="0.9"/><g fill="#e8c458"><rect x="12" y="13.6" width="0.9" height="0.9" fill="#e8c458"/><rect x="14" y="20" width="0.9" height="0.9" fill="#e8c458"/><rect x="17" y="24" width="0.9" height="0.9" fill="#e8c458"/><rect x="19.6" y="19" width="0.9" height="0.9" fill="#e8c458"/><rect x="12.6" y="24.4" width="0.9" height="0.9" fill="#e8c458"/><rect x="22.6" y="23" width="0.9" height="0.9" fill="#e8c458"/></g></svg><div class="t"><span class="l"><span id="L24_0"><span style="letter-spacing:-.7px">Poké</span><span class="z"><span class="u" style="letter-spacing:-.6px">g</span><i class="bx" style="width:5.4px;height:11.4px;margin-left:1.7px"></i><i class="bx" style="width:5.4px;height:11.4px;margin-left:1.7px"></i><i class="bx" style="width:5.4px;height:11.4px;margin-left:1.7px"></i><i class="bx" style="width:5.4px;height:11.4px;margin-left:1.7px"></i><i class="bx" style="width:5.4px;height:11.4px;margin-left:1.7px"></i><span style="margin-left:1.2px;letter-spacing:-.4px">l</span><i class="bx" style="width:3.4px;height:11.4px;margin-left:0.6px"></i><span style="margin-left:.6px;letter-spacing:-.6px">ịt</span><span style="font-size:13.5px;letter-spacing:-.4px">ổ</span><span class="zs"><i></i><i></i><i></i><i></i><b>×</b></span></span></span></span><span class="l"><span id="L24_1"><span class="z"><span style="letter-spacing:-.8px">ç</span><i class="bx" style="width:5.4px;height:11.4px;margin-left:1.7px"></i><i class="bx" style="width:5.4px;height:11.4px;margin-left:1.7px"></i><span class="u" style="margin-left:1.4px;letter-spacing:-.8px">h</span><i class="bx" style="width:5.4px;height:11.4px;margin-left:1.6px"></i><i class="bx" style="width:5.4px;height:11.4px;margin-left:1.7px"></i><i class="bx" style="width:5.4px;height:11.4px;margin-left:1.7px"></i></span></span></span></div></div>
<div class="ic" style="left:324px;top:450px"><svg viewBox="0 0 32 32"><defs><linearGradient id="tg_whatif" x1="0" x2="1" y1="0" y2="0"><stop offset="0" stop-color="#ff00e0"/><stop offset=".3" stop-color="#f418ee"/><stop offset="1" stop-color="#48f4fa"/></linearGradient></defs><rect x="1.2" y="1.7" width="31.3" height="28.900000000000002" fill="#8e8e8e"/><rect x="31.6" y="2.3" width="0.9" height="28.3" fill="#3c3c44"/><rect x="1.8" y="29.8" width="30.6" height="0.8" fill="#3c3c44"/><rect x="2.6" y="3.0" width="28" height="4.2" fill="url(#tg_whatif)"/><rect x="22.4" y="5.1" width="8.2" height="2.1" fill="#000"/><rect x="24.4" y="5.1" width="0.7" height="1.2" fill="#bff"/><rect x="26.8" y="5.1" width="0.7" height="1.2" fill="#bff"/><rect x="29.2" y="5.1" width="0.7" height="1.2" fill="#bff"/><rect x="2.6" y="7.2" width="28" height="1.1" fill="#e8e8e8"/><rect x="2.6" y="8.3" width="28.2" height="21.2" fill="#000"/><rect x="3.4" y="9" width="26.6" height="19.6" fill="#0c1804"/><rect x="3.9" y="9.2" width="0.6" height="19" fill="#6a9820"/><rect x="5.52" y="9.2" width="0.6" height="19" fill="#98c838"/><rect x="7.14" y="9.2" width="0.6" height="19" fill="#98c838"/><rect x="8.76" y="9.2" width="0.6" height="19" fill="#6a9820"/><rect x="10.38" y="9.2" width="0.6" height="19" fill="#98c838"/><rect x="12.0" y="9.2" width="0.6" height="19" fill="#98c838"/><rect x="13.62" y="9.2" width="0.6" height="19" fill="#6a9820"/><rect x="15.24" y="9.2" width="0.6" height="19" fill="#98c838"/><rect x="16.86" y="9.2" width="0.6" height="19" fill="#98c838"/><rect x="18.48" y="9.2" width="0.6" height="19" fill="#6a9820"/><rect x="20.1" y="9.2" width="0.6" height="19" fill="#98c838"/><rect x="21.72" y="9.2" width="0.6" height="19" fill="#98c838"/><rect x="23.34" y="9.2" width="0.6" height="19" fill="#6a9820"/><rect x="24.96" y="9.2" width="0.6" height="19" fill="#98c838"/><rect x="26.58" y="9.2" width="0.6" height="19" fill="#98c838"/><rect x="28.2" y="9.2" width="0.6" height="19" fill="#6a9820"/><g fill="#0c1804"><rect x="3.4" y="9.8" width="26.6" height="0.45" fill="#0c1804"/><rect x="3.4" y="11.1" width="26.6" height="0.45" fill="#0c1804"/><rect x="3.4" y="12.4" width="26.6" height="0.45" fill="#0c1804"/><rect x="3.4" y="13.7" width="26.6" height="0.45" fill="#0c1804"/><rect x="3.4" y="15.0" width="26.6" height="0.45" fill="#0c1804"/><rect x="3.4" y="16.3" width="26.6" height="0.45" fill="#0c1804"/><rect x="3.4" y="17.6" width="26.6" height="0.45" fill="#0c1804"/><rect x="3.4" y="18.9" width="26.6" height="0.45" fill="#0c1804"/><rect x="3.4" y="20.2" width="26.6" height="0.45" fill="#0c1804"/><rect x="3.4" y="21.5" width="26.6" height="0.45" fill="#0c1804"/><rect x="3.4" y="22.8" width="26.6" height="0.45" fill="#0c1804"/><rect x="3.4" y="24.1" width="26.6" height="0.45" fill="#0c1804"/><rect x="3.4" y="25.4" width="26.6" height="0.45" fill="#0c1804"/><rect x="3.4" y="26.7" width="26.6" height="0.45" fill="#0c1804"/><rect x="3.4" y="28.0" width="26.6" height="0.45" fill="#0c1804"/></g><rect x="8.75" y="17" width="0.7" height="6" fill="#e8ffb0"/><rect x="18.5" y="12" width="0.7" height="5" fill="#e8ffb0"/><rect x="20.1" y="10" width="0.7" height="3" fill="#e8ffb0"/><rect x="13.6" y="21" width="0.7" height="4" fill="#e8ffb0"/><rect x="25" y="14" width="0.7" height="4" fill="#d0f090"/><rect x="30" y="9" width="0.9" height="20.6" fill="#c8c8c0"/><rect x="3" y="28.8" width="27.8" height="0.9" fill="#c8c8c0"/></svg><div class="t"><span class="l"><span id="L25_0" style="letter-spacing:0.32px;margin-right:-0.32px">What If</span></span></div></div>
<div class="ic" style="left:432px;top:450px"><svg viewBox="0 0 32 32"><defs><linearGradient id="tg_vpc" x1="0" x2="1" y1="0" y2="0"><stop offset="0" stop-color="#ff00e0"/><stop offset=".3" stop-color="#f418ee"/><stop offset="1" stop-color="#48f4fa"/></linearGradient></defs><rect x="1.2" y="1.6" width="31.3" height="29.599999999999998" fill="#8e8e8e"/><rect x="31.6" y="2.2" width="0.9" height="28.999999999999996" fill="#3c3c44"/><rect x="1.8" y="30.4" width="30.6" height="0.8" fill="#3c3c44"/><rect x="2.6" y="2.9000000000000004" width="28" height="4.2" fill="url(#tg_vpc)"/><rect x="22.4" y="5.0" width="8.2" height="2.1" fill="#000"/><rect x="24.4" y="5.0" width="0.7" height="1.2" fill="#bff"/><rect x="26.8" y="5.0" width="0.7" height="1.2" fill="#bff"/><rect x="29.2" y="5.0" width="0.7" height="1.2" fill="#bff"/><rect x="2.6" y="7.1" width="28" height="1.1" fill="#e8e8e8"/><defs><linearGradient id="vg" x1="0" x2="0" y1="0" y2="1"><stop offset="0" stop-color="#30f4f8"/><stop offset=".5" stop-color="#a080f8"/><stop offset="1" stop-color="#ff10e8"/></linearGradient></defs><rect x="2.6" y="8.6" width="1.3" height="20.4" fill="#000"/><rect x="2.6" y="8.6" width="27" height="1" fill="#000"/><rect x="3.9" y="9.4" width="24.8" height="17.8" fill="url(#vg)"/><rect x="28.7" y="9.4" width="2" height="19.4" fill="#fff"/><rect x="3.9" y="27.2" width="26.8" height="1.6" fill="#fff"/><rect x="7.8" y="11.7" width="17" height="13.8" fill="#fff"/><rect x="8.7" y="12.8" width="15.4" height="11.8" fill="#c2c2c2"/><rect x="8.7" y="12.8" width="12" height="1.8" fill="#000084"/><rect x="21.4" y="12.8" width="2.8" height="1.8" fill="#c2c2c2"/><rect x="21.8" y="13.2" width="0.7" height="1" fill="#000"/><rect x="23" y="13.2" width="0.7" height="1" fill="#000"/><path d="M19 13.4v10.2l2.2-2 2 5 1.9-.8-2-4.8h3.2z" fill="#fff" stroke="#000" stroke-width="1.1"/></svg><div class="t"><span class="l"><span id="L26_0" style="letter-spacing:0.50px;margin-right:-0.50px">Virtual PC</span></span></div></div>
<div class="ic" style="left:540px;top:450px"><svg viewBox="0 0 32 32"><path d="M6.2 11.2l.4-5.6 3 .4 2.4 3.4z" fill="#fff" stroke="#000" stroke-width="1"/><path d="M26.6 11.2l-.4-5.6-3 .4-2.4 3.4z" fill="#fff" stroke="#000" stroke-width="1"/><path d="M8.2 16.6c-2 4-3.6 9.4-3.4 14.6h23.8c.2-5.2-1.4-10.6-3.4-14.6z" fill="#a8a8a8"/><path d="M5.6 18l-1.8 13.2" fill="none" stroke="#000" stroke-width="1" stroke-dasharray="1.2 1"/><path d="M27.2 18l1.8 13.2" fill="none" stroke="#000" stroke-width="1" stroke-dasharray="1.2 1"/><path d="M9.6 8.6h13.4l2.6 4.4v5H7V13z" fill="#a4a4ac"/><path d="M7 12.6h18.800000000000001v4.2l-4 1.2H11l-4-1.2z" fill="#b8b060"/><path d="M8 19c2.6-2 6-3 8.4-3s5.8 1 8.4 3c1.2 3.6 1.6 8.2 1.4 12.2H6.6C6.4 27.2 6.800000000000001 22.6 8 19z" fill="#fff"/><circle cx="11.6" cy="14.6" r="1.7" fill="#000"/><circle cx="20.8" cy="14.6" r="1.7" fill="#000"/><rect x="10.8" y="13.6" width="0.9" height="0.9" fill="#fff"/><rect x="20" y="13.6" width="0.9" height="0.9" fill="#fff"/><rect x="15.4" y="16.4" width="2" height="1.5" fill="#a09040"/><path d="M13 18.6c.4 2.4 1.800000000000001 3 3.4 2.2 1.600000000000001.8 3 .2 3.4-2.2" fill="none" stroke="#000" stroke-width="1"/><line x1="16.4" y1="17.8" x2="16.4" y2="20.6" stroke="#000" stroke-width="0.8"/><path d="M14.6 27.6l1.4 3.6M18.2 27.6l-1.4 3.6" fill="none" stroke="#808080" stroke-width="0.8"/></svg><div class="t"><span class="l"><span id="L27_0" style="letter-spacing:0.23px;margin-right:-0.23px">HAMPSTER</span></span></div></div>
<div class="ic" style="left:648px;top:450px"><svg viewBox="0 0 32 32"><path d="M9 3.2h21c2 0 3.4 2 2.6 4L25.6 27c-.8 2-2.6 3.6-5 3.9l-7.6.3C5.6 31 .6 24.4.8 17.2 1 10 4 5 9 3.2z" fill="#180800"/><path d="M8.4 2.5h20.6c2 0 3.4 2 2.6 4L24.8 26c-.8 2-2.6 3.6-5 3.9l-7.6.3C5 30 .2 23.6.4 16.4.6 9.4 3.6 4.2 8.4 2.5z" fill="#e87810"/><circle cx="14.3" cy="15.9" r="10.7" fill="#000"/><path d="M10 9.6h4.2l6 12.2 1.8-.8.8 1.8-4.2 1.8-3.8-8-3.8 7.6H8l5.4-10.6-.6-1.4H10z" fill="#f08828"/><text x="26" y="10.8" font-family="Liberation Sans,sans-serif" font-weight="bold" font-size="7.4" fill="#000">3</text></svg><div class="t"><span class="l"><span id="L28_0" style="letter-spacing:0.82px;margin-right:-0.82px">Half-Life 3</span></span></div></div>
<div class="ic" style="left:756px;top:450px"><svg viewBox="0 0 32 32"><path d="M8.8 5.2C5 3.4 1.8 5 2.4 8.6c.6 3.4 4 5.6 6.200000000000001 8.200000000000001-1.200000000000001 1-2.8 1-3 -.6" fill="none" stroke="#c08010" stroke-width="1.5"/><path d="M23.8 5.2c3.8-1.8 7-.2 6.4 3.4-.6 3.4-4 5.6-6.2 8.200000000000001 1.2 1 2.8 1 3-.6" fill="none" stroke="#c08010" stroke-width="1.5"/><path d="M8.8 3h15c0 6-1 11.6-5.2 16.8v8.400000000000002h-4.6V19.8C9.8 14.6 8.8 9 8.8 3z" fill="#f8c810"/><path d="M8.8 3h2.6c0 6 1 12 4 16.8v8.4H14V19.8C9.8 14.600000000000001 8.8 9 8.8 3z" fill="#d89810"/><path d="M21 3h2.8c0 6-1 11.6-5.2 16.8v8.4h-1.4V19.8C20 15 21 9 21 3z" fill="#c88410"/><rect x="12" y="3" width="2" height="12" fill="#fff060" opacity=".8"/><rect x="6.8" y="1.6" width="19.2" height="1.7" fill="#c88410"/><rect x="7.4" y="1.6" width="18" height="0.8" fill="#f8d840"/><rect x="10.8" y="27.8" width="11.8" height="1.6" fill="#f8c810"/><rect x="6.8" y="29.3" width="19.4" height="2" fill="#d89810"/><rect x="7.4" y="29.3" width="18" height="0.8" fill="#f8d840"/></svg><div class="t"><span class="l"><span id="L29_0" style="letter-spacing:-0.17px;margin-right:0.17px">ANTHOLOGY</span></span><span class="l"><span id="L29_1" style="letter-spacing:-0.13px;margin-right:0.13px">.AVI</span></span></div></div>
<div class="ic" style="left:0px;top:540px"><svg viewBox="0 0 32 32"><defs><pattern id="yd" width="2" height="2" patternUnits="userSpaceOnUse"><rect width="2" height="2" fill="#6cd820"/><rect width="1" height="1" fill="#2c8c08"/><rect x="1" y="1" width="1" height="1" fill="#2c8c08"/></pattern><pattern id="yr" width="2" height="2" patternUnits="userSpaceOnUse"><rect width="2" height="2" fill="#f48820"/><rect width="1" height="1" fill="#8a2c00"/><rect x="1" y="1" width="1" height="1" fill="#8a2c00"/></pattern></defs><polygon points="8.4,22 26.6,22 30,29.4 5.8,29.4" fill="url(#yr)"/><polygon points="12,23 22,23 20,29.4 12.6,29.4" fill="#6a1820"/><polygon points="7.6,11.6 1,13.6 3.4,15.6 7.4,17.8" fill="#4cb818"/><polygon points="24.6,12 32,11.2 30.6,13.4 26,18.6" fill="#2c8c08"/><polygon points="31,11.3 32,11.2 31.4,12.6" fill="#ffe8d0"/><path d="M15.6 2.5c5 0 9.6 3.6 10 8.6.4 4.6-1 8-3.4 10.4-1.8 1.600000000000001-4 2-6.6 2s-5-.6-6.8-2.4c-2-2-2.6-5.4-2.2-9.2.6-5.4 4.4-9.4 9-9.4z" fill="url(#yd)"/><path d="M9 9.6c1-3.6 3.6-6 6.6-6 2 0 4 1 5.4 2.6-3-1-6-.6-8 1.4L10 14.6H7.6c-.1-1.8.6-3.6 1.4-5z" fill="#70e024"/><path d="M7.4 13.6l3 0 1.6 5.2-1 3-3-3.2z" fill="#70e024"/><rect x="8" y="12.6" width="2.2" height="2" fill="#000"/><rect x="15" y="12.6" width="2.2" height="2" fill="#000"/><rect x="17.2" y="12.8" width="1.4" height="1.2" fill="#e8f8d0"/><rect x="10.2" y="13" width="1" height="1" fill="#e8f8d0"/><rect x="9.8" y="16.5" width="4" height="0.8" fill="#184c00"/><rect x="7.6" y="15" width="1.6" height="1.2" fill="#e0d040"/><path d="M14 10.8c1.6-1 3.6-1 5.2-.2" fill="none" stroke="#205c00" stroke-width="0.8"/></svg><div class="t"><span class="l"><span id="L30_0" style="letter-spacing:1.17px;margin-right:-1.17px">Star</span></span><span class="l"><span id="L30_1" style="letter-spacing:0.27px;margin-right:-0.27px">Wars.avi</span></span></div></div>
<div class="ic" style="left:108px;top:540px"><svg viewBox="0 0 32 32"><path d="M6.2 9.6V3.4l2-1.6 2 .2 5.2 6 1.800000000000001.6h2l1.8-.6 5.2-6 2-.2 2 1.6v6.2l.4 3.4-.2 6.2-.2 3.6.4 5.6-1.2 1.8H6.400000000000001L5.2 28.4l.4-5.6-.2-3.6-.2-6.2z" fill="#000"/><path d="M7.2 9.6V4l1.4-1.200000000000001 1.2.2 5 5.8 2.2.8h2.2l2.2-.8 5-5.8 1.2-.2L29 4v5.6l.4 3.6-.2 6-.4 3.4H7.4L7 19.2l-.2-6z" fill="#e0883c"/><path d="M8.6 8.6V5.4l1.6.8 2.4 3-2.400000000000001 1.4z" fill="#f8c4a8"/><path d="M27.6 8.6V5.4l-1.6.8-2.4 3 2.400000000000001 1.4z" fill="#f8c4a8"/><path d="M16.6 8.4h3.000000000000002l.8 5.6 1.8 2.4.4 4-1 2.4h-7l-1-2.4.4-4 1.8-2.4z" fill="#fff"/><path d="M6.4 22c2-.8 4.4-.8 6.4.6h10.6c2-1.4 4.4-1.4 6.4-.6l.4 6-1 1.6H6.8l-.8-1.6z" fill="#f2f2f2"/><rect x="13" y="11.7" width="2" height="1.7" fill="#000"/><rect x="21" y="11.7" width="2" height="1.7" fill="#000"/><rect x="17" y="15.2" width="2.4" height="2.2" fill="#000" rx=".6"/><path d="M14.6 18.2c1 .8 2.6 1 3.6.2 1 .8 2.6.6 3.6-.2" fill="none" stroke="#40200c" stroke-width="0.7"/><ellipse cx="18.2" cy="20.3" rx="2" ry="1.6" fill="#f42020"/><path d="M8.6 27c1.600000000000001-1.600000000000001 4.4-1.600000000000001 6 0" fill="none" stroke="#000" stroke-width="1"/><path d="M21.6 27c1.600000000000001-1.600000000000001 4.4-1.600000000000001 6 0" fill="none" stroke="#000" stroke-width="1"/><path d="M16 23.4l2.2 3.4 2.2-3.4" fill="none" stroke="#c0c0c0" stroke-width="0.8"/></svg><div class="t"><span class="l"><span id="L31_0" style="letter-spacing:0.47px;margin-right:-0.47px">Corglitch</span></span></div></div>
<div class="ic" style="left:216px;top:540px"><svg viewBox="0 0 32 32"><defs><pattern id="dd" width="1.6" height="1.6" patternUnits="userSpaceOnUse"><rect width="1.6" height="1.6" fill="#e83048"/><circle cx=".8" cy=".8" r=".55" fill="#ffd0ec"/></pattern><pattern id="dy" width="1.6" height="1.8" patternUnits="userSpaceOnUse"><rect width="1.6" height="1.8" fill="#e83048"/><circle cx=".8" cy=".9" r=".55" fill="#ffe860"/></pattern></defs><path d="M10 -.4h12.6l2.4 2.6 3.4 3.6V10H4.4V5.8L7.6 2.2z" fill="#fff" stroke="#000" stroke-width="1.1"/><rect x="4.4" y="6.6" width="24" height="1" fill="#000" opacity=".15"/><rect x="2.8" y="14.8" width="1.8" height="4.4" fill="#000"/><rect x="28.2" y="14.8" width="1.8" height="4.4" fill="#000"/><rect x="3.6" y="9.8" width="25.8" height="9" fill="#000"/><rect x="5.8" y="10.7" width="9.3" height="6.9" fill="url(#dd)"/><rect x="16.4" y="10.7" width="10.4" height="6.9" fill="url(#dd)"/><rect x="7.6" y="12.4" width="6" height="3.6" fill="#000"/><rect x="18.2" y="12.4" width="6.8" height="3.6" fill="#000"/><rect x="8" y="13" width="5" height="0.9" fill="#fff0c0"/><rect x="8.6" y="14.8" width="4" height="0.7" fill="#f8f8f8"/><rect x="18.6" y="13" width="5.6" height="0.9" fill="#fff0c0"/><rect x="19.4" y="14.8" width="4.4" height="0.7" fill="#f8f8f8"/><rect x="5.4" y="18.6" width="3" height="8.4" fill="url(#dy)" stroke="#000" stroke-width="0.6"/><rect x="24.4" y="18.6" width="2.6" height="8.4" fill="url(#dy)" stroke="#000" stroke-width="0.6"/><path d="M8 18.4h16.7v8.6l-2.7 3.600000000000001H10.6L8 27z" fill="#fff" stroke="#000" stroke-width="1.1"/><path d="M8.6 28l2.4 2.4h10.6l2.400000000000002-2.4" fill="none" stroke="#b0b0b0" stroke-width="1"/><path d="M14 19.8c.6 1.400000000000002 3.6 1.400000000000002 4.4 0" fill="none" stroke="#a0a0a0" stroke-width="0.8"/><circle cx="15.9" cy="4.6" r="5.6" fill="#24e4ec" stroke="#000" stroke-width="1"/><circle cx="15" cy="4.6" r="3.2" fill="#c4c4c4"/><circle cx="17.6" cy="3.6" r="2" fill="#a8d8d8"/><circle cx="14.2" cy="3.8" r="1" fill="#e8e8e8"/></svg><div class="t"><span class="l"><span id="L32_0" style="letter-spacing:0.96px;margin-right:-0.96px">Doctor</span></span><span class="l"><span id="L32_1" style="letter-spacing:0.77px;margin-right:-0.77px">Marburg</span></span></div></div>
<div class="ic" style="left:324px;top:540px"><svg viewBox="0 0 32 32"><rect x="1" y="-0.7" width="31.6" height="26" fill="#fffbd0" stroke="#000" stroke-width="1.2"/><rect x="3.9" y="1.6" width="26.2" height="21.6" fill="#000"/><rect x="6.2" y="3.2" width="21.6" height="15.4" fill="#c4c4ff" rx="1.6"/><rect x="8.9" y="5.3" width="7" height="7.6" fill="#fff" rx="2.2" stroke="#000" stroke-width="1.3"/><rect x="19" y="5.3" width="7" height="7.6" fill="#fff" rx="2.2" stroke="#000" stroke-width="1.3"/><path d="M10.6 5.4v3c0 1 .8 1.6 1.8 1.6s1.8-.6 1.8-1.6v-3" fill="none" stroke="#000" stroke-width="1.3"/><path d="M20.8 12.8V10c0-1 .8-1.600000000000001 1.800000000000001-1.600000000000001s1.800000000000001.6 1.800000000000001 1.600000000000001v2.8" fill="none" stroke="#000" stroke-width="1.3"/><rect x="9.8" y="15.2" width="15" height="1.4" fill="#000"/><path d="M13.6 16.6h7.6v5.4c0 1-.8 1.600000000000001-1.800000000000001 1.600000000000001h-4c-1 0-1.8-.6-1.8-1.6z" fill="#f474b4" stroke="#000" stroke-width="1"/><rect x="17" y="16.6" width="0.9" height="5" fill="#000"/><rect x="27.8" y="22.4" width="2.2" height="0.8" fill="#000"/><rect x="3.9" y="23.2" width="26.2" height="1.6" fill="#fffbd0"/><rect x="4.8" y="25.6" width="24.2" height="1.5" fill="#fffbd0" stroke="#000" stroke-width="0.9"/><rect x="8.6" y="27.3" width="16.4" height="1.4" fill="#fffbd0" stroke="#000" stroke-width="0.9"/><rect x="1.6" y="29" width="30.4" height="2.2" fill="#fffbd0" stroke="#000" stroke-width="1.1"/></svg><div class="t"><span class="l"><span id="L33_0" style="letter-spacing:-0.27px;margin-right:0.27px">DEREG32.EX</span></span><span class="l"><span id="L33_1">E</span></span></div></div>
<div class="ic" style="left:432px;top:540px"><svg viewBox="0 0 32 32"><rect x="0.9" y="-0.7" width="31.6" height="31.9" fill="#fff" stroke="#000030" stroke-width="1.3"/><path d="M13.6 11.2h17v5h-17z" fill="#10e424" stroke="#000" stroke-width="0.8"/><path d="M14.6 8.400000000000001c2-1 5-1.2 7.6-1.2 3 0 6 .4 8 1.400000000000001v2.6H14.6z" fill="#d0d0d8"/><path d="M14.3 16.2h15.7v5.4l-2 3.8h-9.4l-4.3-3.6z" fill="#d4d4ec"/><path d="M24.6 16.2H30v5.4l-2 3.8h-4.4c1.6-2.4 2-6 1-9.2z" fill="#a0a0a0"/><circle cx="21" cy="17.8" r="2" fill="#fff" stroke="#000" stroke-width="0.9"/><rect x="20.2" y="15" width="1.2" height="2" fill="#000"/><rect x="19.4" y="21.2" width="4.6" height="1" fill="#000"/><rect x="20.8" y="23.4" width="2" height="1" fill="#000"/><path d="M13.3 25.6l2-1 3.4 1.4 4 .2 3.6-.6 3-1 1.4 1v5.2H13.3z" fill="#1030e4"/><line x1="15" y1="26.4" x2="17.4" y2="29" stroke="#58c8ff" stroke-width="0.8"/><rect x="10.6" y="29.6" width="4" height="1.2" fill="#f020d0"/><rect x="28.6" y="29.6" width="3.4" height="1.2" fill="#f020d0"/><path d="M7.8 9.6C8.400000000000001 4 12 .2 18 .3h9.6l2 2.4c1.6 2 2 5 1.4 7.6-4-2-8-2.2-12.4-1.8-3 .4-6 1.6-8.6 3.4l-3.4 1.800000000000001L4.2 12z" fill="#f01414"/><path d="M11.6 5.6c2-2 4.4-2.6 6.6-2.2" fill="none" stroke="#900000" stroke-width="0.8"/><rect x="26.4" y="5.4" width="1.4" height="1.4" fill="#ff50c0"/><rect x="2" y="9.2" width="2.4" height="3.4" fill="#0000c0"/><path d="M4.8 9.4L7.4 6.6 10 9.4V30.6H4.8z" fill="#30e4f4" stroke="#08a0b0" stroke-width="0.6"/><text transform="translate(9.2 12.4) rotate(90)" font-family="Liberation Sans,sans-serif" font-weight="bold" font-size="4.6" fill="#000" letter-spacing=".5">SKI</text><pattern id="ck" width="2" height="2" patternUnits="userSpaceOnUse"><rect width="2" height="2" fill="#fff"/><rect width="1" height="1" fill="#000"/><rect x="1" y="1" width="1" height="1" fill="#000"/></pattern><rect x="2.2" y="22.8" width="4.6" height="7.8" fill="url(#ck)" stroke="#000" stroke-width="0.7"/></svg><div class="t"><span class="l"><span id="L34_0" style="letter-spacing:0.18px;margin-right:-0.18px">SkiFree</span></span></div></div>
<div class="ic" style="left:540px;top:540px"><svg viewBox="0 0 32 32"><line x1="29.4" y1="0.6" x2="24" y2="6" stroke="#f4f4f4" stroke-width="2.6"/><line x1="29.4" y1="0.6" x2="25" y2="5" stroke="#b0b0b8" stroke-width="0.8"/><line x1="24" y1="6" x2="15" y2="15" stroke="#1424e4" stroke-width="2.4"/><line x1="15" y1="15" x2="3.4" y2="26.6" stroke="#7a5a10" stroke-width="2.4"/><line x1="15" y1="15" x2="3.4" y2="26.6" stroke="#201000" stroke-width="2.4" stroke-dasharray="1 1.2"/><line x1="4.6" y1="0.6" x2="10" y2="6" stroke="#f4f4f4" stroke-width="2.6"/><line x1="4.6" y1="0.6" x2="9" y2="5" stroke="#b0b0b8" stroke-width="0.8"/><line x1="10" y1="6" x2="20" y2="16" stroke="#e42424" stroke-width="2.4"/><line x1="20" y1="16" x2="30.4" y2="26.6" stroke="#7a5a10" stroke-width="2.4"/><line x1="20" y1="16" x2="30.4" y2="26.6" stroke="#201000" stroke-width="2.4" stroke-dasharray="1 1.2"/><rect x="7.6" y="12" width="3" height="7.4" fill="#c49820" stroke="#000" stroke-width="0.9"/><rect x="23.6" y="12" width="3" height="7.4" fill="#c49820" stroke="#000" stroke-width="0.9"/><rect x="8.4" y="14.4" width="1.4" height="3" fill="#c02020"/><rect x="24.4" y="14.4" width="1.4" height="3" fill="#c02020"/><circle cx="8.9" cy="11.6" r="1.5" fill="#000"/><circle cx="25.2" cy="11.6" r="1.5" fill="#000"/><path d="M11 18.4h12.6l-1.6 3.6H12.6z" fill="#501418" stroke="#000" stroke-width="0.6"/><circle cx="15.6" cy="15.6" r="1.6" fill="#1424e4"/><circle cx="3" cy="27.4" r="2" fill="#201000"/><circle cx="31" cy="27.4" r="2" fill="#201000"/><rect x="2.2" y="26.2" width="1.6" height="1.4" fill="#a01818"/><rect x="30" y="26.2" width="1.6" height="1.4" fill="#a01818"/></svg><div class="t"><span class="l"><span id="L35_0" style="letter-spacing:1.11px;margin-right:-1.11px">Progress</span></span><span class="l"><span id="L35_1" style="letter-spacing:0.57px;margin-right:-0.57px">Quest</span></span></div></div>
<div class="ic" style="left:648px;top:540px"><svg viewBox="0 0 32 32"><rect x="0.6" y="-0.7" width="31.8" height="31.8" fill="#fff"/><rect x="2" y="0.6" width="30.4" height="30.5" fill="#24e8e8"/><path d="M6 6l4-3.4 8-2 10 .6 4.4 3V24l-3 7.1H7.6L4 24l1-6 3.4-2z" fill="#f8b888"/><path d="M4.4 8l2-4 5-2.6 9.2-1.2 8 1.200000000000001 3.800000000000001 3v3.6l-2.6-3-3.6-.8-6 .4-4.6 1.600000000000001-4 3.4-2.4 4.4-2 .8-1.4-3z" fill="#5c4030"/><path d="M8 5l3-2 5-1 5 .4-3 1.2-4 1.2-3.4 2.6z" fill="#c89060"/><path d="M12.4 12.600000000000001l2-2.6 5-.6 1 1.200000000000001-4.4 1.200000000000001-2 2.8z" fill="#403030"/><path d="M14 14.4h4.4l-.4 1.8h-3.6z" fill="#fff"/><rect x="15" y="14.400000000000002" width="2.2" height="1.8" fill="#302020"/><path d="M27.6 10.4l2.4 1v4.8l-1.6 1z" fill="#e09868"/><rect x="28.4" y="11.6" width="1.2" height="2.6" fill="#704838"/><path d="M24.4 15l3.6-1 2 2.6 2.4.2v8l-3 6.3h-5l2-6.6-1.6-2z" fill="#504040"/><path d="M7 21l5-.6 2 1.600000000000001 4 .2 2 4-1 4.900000000000002H8.400000000000002L6.6 25.2z" fill="#504040"/><path d="M9.6 24h6v1.4h-6z" fill="#f8b888"/><path d="M10 27l4-.4v3l-3 .4z" fill="#c89060"/><polygon points="2,22.6 5.4,21.4 6.4,31.1 2,31.1" fill="#f408f0"/><polygon points="26.6,25 32.4,23 32.4,31.1 25.4,31.1" fill="#f408f0"/><rect x="31.2" y="27" width="1.2" height="4.100000000000001" fill="#fff" opacity=".7"/></svg><div class="t"><span class="l"><span id="L36_0" style="letter-spacing:0.20px;margin-right:-0.20px">KOF 93</span></span></div></div>
<div class="ic" style="left:0px;top:630px"><svg viewBox="0 0 32 32"><defs><filter id="vb" x="-5%" y="-5%" width="110%" height="110%"><feGaussianBlur stdDeviation=".45"/></filter><clipPath id="vc"><rect x=".9" y="-.7" width="31.6" height="31.9"/></clipPath></defs><rect x="0.9" y="-0.7" width="31.6" height="31.9" fill="#d4a484"/><g clip-path="url(#vc)"><g filter="url(#vb)"><rect x="0.9" y="-0.7" width="31.6" height="4.4" fill="#ecd0b8"/><polygon points="9,-0.7 19.4,-0.7 19.6,8 18.8,19.4 13,19.4 12.2,8" fill="#f6e0cc"/><path d="M1 5.6l5-1.2 6 1.4.6 6.4-5 1-6.4-1z" fill="#b88064"/><path d="M19.8 5.6l6-1.4 6.4 2v6l-7 .6-5.4-1.400000000000001z" fill="#b88064"/><path d="M3 8.6c2-1 5-1 7.4.2l-.4 1.8c-2 .8-5 .6-7-.4z" fill="#5c3838"/><path d="M21 7.6c2-1.200000000000001 6-1.200000000000001 8.6.2l-.2 2.2c-2.4 1-6 1-8.200000000000001-.2z" fill="#5c3838"/><rect x="5" y="7" width="4" height="1" fill="#8a5848"/><rect x="23" y="6.2" width="5" height="1" fill="#8a5848"/><ellipse cx="7.4" cy="15.2" rx="4.4" ry="3.6" fill="#f2e0d0"/><ellipse cx="24.8" cy="14.8" rx="5.2" ry="3.8" fill="#f2e0d0"/><rect x="1" y="13" width="2.4" height="8" fill="#c4947a"/><rect x="30" y="12" width="2.5" height="8" fill="#b88064"/><rect x="12" y="18.7" width="2.9" height="1.7" fill="#5c3838"/><rect x="17.4" y="18.7" width="2.9" height="1.7" fill="#5c3838"/><rect x="13.6" y="20" width="5" height="1.2" fill="#a87058"/><path d="M10.4 23.4c3.6-1 9.6-1 13.2 0v1.8H10.4z" fill="#f2e0d0"/><path d="M10.4 25c3.6 1 9.6 1 13.2 0l-1.6 3.4H12z" fill="#b07860"/><rect x="9.4" y="24.4" width="2.2" height="2.8" fill="#5c3838"/><rect x="21.2" y="24.4" width="2.2" height="2.8" fill="#5c3838"/><rect x="12.4" y="27.8" width="9" height="3.6" fill="#c69478"/><rect x="0.9" y="20" width="4.4" height="11.2" fill="#b48064"/><rect x="27.6" y="20" width="5" height="11.2" fill="#a87860"/><rect x="5" y="19.6" width="4" height="5" fill="#c89c80"/><rect x="23.4" y="19.6" width="4" height="5" fill="#c89c80"/></g></g><rect x="0.9" y="-0.7" width="0.9" height="31.9" fill="#f8e4e0"/><rect x="0.9" y="-0.7" width="31.6" height="0.9" fill="#f8e4e0"/><rect x="31.6" y="0" width="0.9" height="31.2" fill="#8a5060"/><rect x="1.6" y="30.4" width="30.9" height="0.8" fill="#8a5060"/></svg><div class="t"><span class="l"><span id="L37_0" style="letter-spacing:0.62px;margin-right:-0.62px">Virtual Girl</span></span></div></div>
<div class="ic" style="left:108px;top:630px"><svg viewBox="0 0 32 32"><path d="M2.8 1.6l3.6 1.8 7 5.8 2.4-1.2 4.8-.4 1.200000000000001-1.8 2.4-3.2L25.4 2.6l-.6 5 2 1 3 3.4 1.8 4.6.2 3.8-1.4 1.4-1.600000000000001 3.4-2.6 2.8-4 1.2-4-.2-2.6-2.6-3.6-.6-2-2-5.600000000000001 2.2 3-5.8-2.2-2.6.4-3.4 1.4-2.4L5 8z" fill="#14b044" stroke="#000" stroke-width="1.3"/><path d="M9 11l6 1 6 3 6 6.6-2 3.4-7-3.4-4 2.6-3-2 3-3.6z" fill="#0c7c30"/><path d="M4.6 3.6l7 6.6-2.6 1z" fill="#0c8c34"/><path d="M13.4 7.4c1.600000000000001 1.600000000000001 6.6 1.8 8.6-.2" fill="none" stroke="#e8e424" stroke-width="1.6"/><path d="M14.6 6.6l.4 1.6M20.6 6.2l-.2 1.8" fill="none" stroke="#000" stroke-width="0.5"/><rect x="5.7" y="11.2" width="1.3" height="3.6" fill="#e8e424" stroke="#000" stroke-width="0.4"/><path d="M13.4 19l4-1.4 4.6 1 3 1.4 4.6.6-.8 2.6-2.4 3.6-3.8 1.400000000000002-3.8-.6-2.4-2.4z" fill="#f47890" stroke="#000" stroke-width="0.9"/><path d="M16.6 20.2l5 1.2 2.4 2.4-.6 2.4-3.4.2-2-2.6z" fill="#a86070"/><ellipse cx="22" cy="25.4" rx="1.8" ry="1.1" fill="#fcb4c4"/><rect x="25.8" y="20.6" width="1.3" height="1.3" fill="#fff"/><rect x="27.4" y="20.6" width="1.1" height="1.1" fill="#fff"/><rect x="29" y="19.8" width="2" height="1.8" fill="#fff"/><path d="M14.6 12.4l6 2.4 3 3" fill="none" stroke="#000" stroke-width="1.2"/><circle cx="19.6" cy="15.6" r="1.5" fill="#e8e424" stroke="#000" stroke-width="0.8"/><rect x="19.2" y="15.2" width="1" height="1" fill="#000"/><path d="M23 9l3 3.6 2 4" fill="none" stroke="#0c7c30" stroke-width="1.2"/></svg><div class="t"><span class="l"><span id="L38_0" style="letter-spacing:0.10px;margin-right:-0.10px">Hydra.exe</span></span></div></div>
<div class="ic" style="left:216px;top:630px"><svg viewBox="0 0 32 32"><ellipse cx="6.6" cy="26.6" rx="6" ry="3.4" fill="#7030b8" opacity=".55"/><circle cx="18.7" cy="17.1" r="13.7" fill="#d0f820" stroke="#000" stroke-width="1.2"/><path d="M7 24c-2.6-5-2-11 1.600000000000001-15.4" fill="none" stroke="#a8d410" stroke-width="2"/><ellipse cx="21.8" cy="13" rx="2.7" ry="4.6" fill="#000" transform="rotate(-18 21.8 13)"/><ellipse cx="29.5" cy="12.4" rx="2.2" ry="4.4" fill="#000" transform="rotate(-18 29.5 12.4)"/><path d="M16.9 20.2c1.600000000000001 3.4 4.6 5.4 8 5.6 2 .2 3.8-.2 5.4-1" fill="none" stroke="#000" stroke-width="1.4"/></svg><div class="t"><span class="l"><span id="L39_0" style="letter-spacing:0.20px;margin-right:-0.20px">Acid Box 93</span></span></div></div>
<div class="ic" style="left:324px;top:630px"><svg viewBox="0 0 32 32"><polygon points="16.3,-0.4 31.6,6.8 16.3,14 1,6.8" fill="#8484f8"/><polygon points="1,6.8 16.3,14 16.3,31 1,23.7" fill="#108c8c"/><polygon points="31.6,6.8 16.3,14 16.3,31 31.6,23.7" fill="#f88484"/><path d="M1.6 7l14.7 7 14.7-7M16.3 14V30.6" fill="none" stroke="#fff" stroke-width="1"/><polygon points="16.3,-0.4 31.6,6.8 31.6,23.7 16.3,31 1,23.7 1,6.8" fill="none" stroke="#000" stroke-width="1.3"/></svg><div class="t"><span class="l"><span id="L40_0" style="letter-spacing:0.39px;margin-right:-0.39px">Arena 93</span></span></div></div>
<div class="ic" style="left:432px;top:630px"><svg viewBox="0 0 32 32"><rect x="0.4" y="9.2" width="2" height="8" fill="#c8f020"/><rect x="2" y="7.2" width="2" height="2" fill="#c8f020"/><rect x="4" y="6.2" width="3" height="2" fill="#c8f020"/><rect x="2.4" y="13" width="2" height="2" fill="#c8f020"/><rect x="8.4" y="6" width="2" height="2" fill="#c8f020"/><rect x="10" y="5" width="4" height="2" fill="#c8f020"/><rect x="8.4" y="8" width="2" height="7" fill="#c8f020"/><rect x="10" y="15" width="4" height="2" fill="#c8f020"/><rect x="14" y="8" width="2" height="7" fill="#c8f020"/><rect x="12.4" y="7" width="2" height="2" fill="#c8f020"/><rect x="11" y="11" width="2" height="2" fill="#c8f020"/><rect x="15" y="3.6" width="2" height="2" fill="#c8f020"/><rect x="21" y="1.6" width="2" height="2" fill="#c8f020"/><rect x="17" y="5.6" width="8.6" height="2" fill="#c8f020"/><rect x="24.6" y="1.6" width="2" height="6" fill="#c8f020"/><rect x="23" y="-0.7" width="9.6" height="2" fill="#c8f020"/><rect x="30.6" y="1.2" width="2.2" height="4" fill="#c8f020"/><rect x="28.6" y="3.4" width="2" height="2" fill="#c8f020"/><rect x="19" y="7.6" width="2" height="13.6" fill="#c8f020"/><rect x="17" y="19.2" width="4" height="2.2" fill="#c8f020"/><rect x="22" y="10" width="2" height="2" fill="#c8f020"/><rect x="27" y="5.4" width="2" height="4" fill="#c8f020"/><rect x="28.6" y="9.4" width="2" height="4" fill="#c8f020"/><rect x="27" y="13.4" width="2" height="4" fill="#c8f020"/><rect x="28.6" y="17" width="2.4" height="2" fill="#c8f020"/><rect x="4.8" y="17.6" width="2" height="2" fill="#c8f020"/><rect x="6.8" y="19.6" width="2" height="2" fill="#c8f020"/><rect x="13" y="17" width="2" height="2" fill="#c8f020"/><rect x="16" y="23.4" width="8" height="2" fill="#c8f020"/><rect x="15" y="25.4" width="2.4" height="4" fill="#c8f020"/><rect x="22.6" y="25.4" width="2.4" height="4" fill="#c8f020"/><rect x="16" y="29.2" width="8" height="2" fill="#c8f020"/><rect x="20" y="24.6" width="3" height="2" fill="#c8f020"/><rect x="28.8" y="23.4" width="4.2" height="4" fill="#c8f020"/></svg><div class="t"><span class="l"><span id="L41_0" style="letter-spacing:0.50px;margin-right:-0.50px">Game Of Life</span></span></div></div>
<div class="ic" style="left:540px;top:630px"><svg viewBox="0 0 32 32"><rect x="10.6" y="1.6" width="14" height="12" fill="#fff" stroke="#000" stroke-width="1"/><rect x="10.6" y="1.4" width="14" height="1.2" fill="#000"/><rect x="9.6" y="3.4" width="15.4" height="12" fill="#fff" stroke="#000" stroke-width="0.9"/><rect x="8.8" y="6.4" width="15" height="9" fill="#fff" stroke="#000" stroke-width="0.9"/><rect x="10.6" y="5" width="1.4" height="1" fill="#20d0e8"/><path d="M11.2 10.400000000000002l1.6-1.8 1.6 1.8-1 1.4.6 1.6h-2.4l.6-1.6z" fill="#f424d4"/><path d="M18 10.400000000000002l1.6-1.8 1.6 1.8-1 1.4.6 1.6h-2.4l.6-1.6z" fill="#f424d4"/><polygon points="23.8,14.4 26.2,12.4 26.2,28.4 23.8,31" fill="#90b414" stroke="#000" stroke-width="0.9"/><rect x="7.8" y="13.6" width="16" height="17.6" fill="#c8f020" stroke="#000" stroke-width="1.2"/><rect x="13.8" y="13" width="4.6" height="2.6" fill="#fff"/><rect x="6.4" y="13.6" width="2.4" height="2.8" fill="#c8f020" stroke="#000" stroke-width="0.8"/><rect x="10.2" y="14.8" width="11" height="14.4" fill="#6a7c08"/><pattern id="sd" width="1.4" height="1.4" patternUnits="userSpaceOnUse"><rect width="1.4" height="1.4" fill="#30e0e8"/><rect width=".6" height=".6" fill="#90f8f8"/></pattern><rect x="11" y="15.6" width="9.4" height="12.8" fill="url(#sd)"/><path d="M25.8 10.8l.8 1.8 1.8.6-1.8.8-.8 1.8-.8-1.8-1.8-.8 1.8-.6z" fill="#d8ff30" stroke="#6a7c08" stroke-width="0.4"/></svg><div class="t"><span class="l"><span id="L42_0" style="letter-spacing:0.24px;margin-right:-0.24px">Solitude</span></span></div></div>
<div class="ic" style="left:648px;top:630px"><svg viewBox="0 0 32 32"><g fill="#000"><polygon points="14.8,6.4 15.4,1.6 18.4,1.6 19,6.4" fill=""/><polygon points="14.8,24.4 15.6,29 18.2,29 19,24.4" fill=""/><polygon points="7.6,13.2 2.9,13.9 2.9,16.7 7.6,17.4" fill=""/><polygon points="25.6,13.2 30.6,13.9 30.6,16.7 25.6,17.4" fill=""/><polygon points="10.8,7 7.4,5.6 6.6,6.8 8.2,10" fill=""/><polygon points="22.4,7 25.8,5.6 26.8,6.8 25,10" fill=""/><polygon points="8.2,20.8 6.8,24 8,25 11,23.4" fill=""/><polygon points="25,20.8 26.4,24 25.2,25 22.2,23.4" fill=""/></g><circle cx="16.6" cy="15.3" r="9.9" fill="#000"/><path d="M11 22.6C6.6 19.6 6 13 9.6 9 13 5.2 19.4 5 23 8.6c2 2 2.8 4.6 2.6 7.2l-2.4 3.6-4 3.2-4.6 1z" fill="#d8a4d8"/><path d="M10 19.6C7.6 16.4 8 11.8 11 9c2.4-2.2 6-2.8 9-1.4-4 .2-7.6 2.600000000000001-8.4 6.4-.4 2-.2 3.8.6 5.6z" fill="#f2d8f2"/><circle cx="18.6" cy="17.3" r="3.9" fill="#000"/><path d="M14 21.6c2 1.600000000000001 5 2 7.6.6 2-1 3.4-2.8 3.8-5" fill="none" stroke="#000" stroke-width="1.6" stroke-dasharray="1 1"/><g fill="#000" opacity=".7"><rect x="20.6" y="9.6" width=".9" height=".9"/><rect x="22.2" y="11" width=".9" height=".9"/><rect x="23.4" y="12.8" width=".9" height=".9"/><rect x="22" y="13.4" width=".9" height=".9"/><rect x="23.6" y="15" width=".9" height=".9"/><rect x="21" y="11.6" width=".9" height=".9"/><rect x="19.4" y="10.6" width=".9" height=".9"/><rect x="13" y="20" width=".9" height=".9"/><rect x="14.6" y="20.8" width=".9" height=".9"/><rect x="11.6" y="18.6" width=".9" height=".9"/><rect x="16" y="12" width=".9" height=".9"/><rect x="13.4" y="16.6" width=".9" height=".9"/><rect x="22.6" y="9.2" width=".9" height=".9"/><rect x="18" y="9" width=".9" height=".9"/></g><g fill="#e8c0e8"><rect x="21.6" y="19" width=".9" height=".9"/><rect x="20.4" y="20.6" width=".9" height=".9"/><rect x="22.8" y="17.4" width=".9" height=".9"/><rect x="16.8" y="21.8" width=".9" height=".9"/><rect x="18.6" y="22" width=".9" height=".9"/></g><rect x="14.7" y="13.4" width="2.6" height="2.6" fill="#fff" rx=".7"/><rect x="16.2" y="1.8" width="1.3" height="1.4" fill="#f4dcf4"/><rect x="3.1" y="14.7" width="1.4" height="1.2" fill="#f4dcf4"/><rect x="7.2" y="6" width="1.1" height="1.1" fill="#f4dcf4"/><rect x="25.2" y="6" width="1.1" height="1.1" fill="#f4dcf4"/><rect x="28.8" y="14.7" width="1.4" height="1.2" fill="#f4dcf4"/><rect x="7.4" y="23.4" width="1.1" height="1.1" fill="#f4dcf4"/><rect x="25" y="23.4" width="1.1" height="1.1" fill="#f4dcf4"/><rect x="16.3" y="27.4" width="1.2" height="1.2" fill="#f4dcf4"/></svg><div class="t"><span class="l"><span id="L43_0" style="letter-spacing:0.95px;margin-right:-0.95px">Brian</span></span><span class="l"><span id="L43_1" style="letter-spacing:0.90px;margin-right:-0.90px">Sweeper</span></span></div></div>
<div class="ic" style="left:756px;top:630px"><svg viewBox="0 0 32 32"><defs><linearGradient id="gf" x1="0" x2="1" y1="0" y2="0"><stop offset="0" stop-color="#c07848"/><stop offset=".25" stop-color="#f4b484"/><stop offset=".7" stop-color="#f0ac7c"/><stop offset="1" stop-color="#b06838"/></linearGradient><linearGradient id="gh" x1="0" x2="1" y1="0" y2="0"><stop offset="0" stop-color="#8c3c04"/><stop offset=".5" stop-color="#d87014"/><stop offset="1" stop-color="#a04808"/></linearGradient></defs><rect x="4.9" y="12.6" width="1.8" height="4.4" fill="#402010"/><rect x="26" y="12.6" width="1.8" height="4.4" fill="#402010"/><path d="M7.2 7h18.6v19.400000000000002l-1.6 4.8H9l-1.8-4.8z" fill="url(#gf)"/><path d="M6.5 13V4c1-2.4 4-3.4 6.4-3.4h7.400000000000001c3 0 5.6 1.4 6.1 3.8V13l-1.4-.4-.8-4.4-3-1-2-.2-4 .2-5.4.6-1.4 2-.5 3z" fill="url(#gh)"/><path d="M17.6 1c2 .4 3.4 2 3.6 4.4l-1.4 1.800000000000001c-.2-2.4-.8-4.6-2.2-6.2z" fill="#f08818"/><rect x="9.4" y="11.6" width="5.2" height="1" fill="#603010"/><rect x="18.4" y="11.6" width="5.2" height="1" fill="#603010"/><rect x="10.1" y="12.7" width="4" height="1.9" fill="#fff"/><rect x="18.9" y="12.7" width="4" height="1.9" fill="#fff"/><rect x="11.2" y="12.7" width="2" height="1.9" fill="#2020c4"/><rect x="20.6" y="12.7" width="2" height="1.9" fill="#2020c4"/><rect x="15.4" y="13" width="1.4" height="5.6" fill="#d89060"/><rect x="14.4" y="18" width="3.6" height="1" fill="#a86038"/><rect x="12.7" y="20.8" width="8.4" height="1" fill="#a0502c"/><rect x="13.6" y="22.6" width="6.4" height="0.7" fill="#d8946c"/><path d="M8.2 26.4h16.6l-.8 4.800000000000001H9.2z" fill="#9c5834"/><rect x="11" y="27" width="9" height="1.2" fill="#c88058" opacity=".7"/></svg><div class="t"><span class="l"><span id="L44_0" style="letter-spacing:0.34px;margin-right:-0.34px">Gafa3D</span></span></div></div>
<div class="ic" style="left:864px;top:630px"><svg viewBox="0 0 32 32"><polygon points="1,3 7.3,2.4 16.4,4.5 16.4,6.5 7.3,4.5" fill="#788400"/><polygon points="7.7,1 16.4,3 16.4,11.4 7.7,11.4" fill="#20e480"/><polygon points="7.7,1 10,.2 18.5,2.4 16.4,3" fill="#58f0a8"/><rect x="15" y="4.5" width="3.5" height="9.7" fill="#000"/><polygon points="1,3 7.3,4.5 7.3,28 1,26" fill="#d8f420"/><polygon points="1,3 2.6,2.6 2.6,26.5 1,26" fill="#a0b400"/><polygon points="1,26 7.3,28 16.6,30.6 18.6,29 18.6,27.5 16.6,28.2 7.3,25.6" fill="#d8f420"/><rect x="7.3" y="10.7" width="6.3" height="7" fill="#20e4ec"/><polygon points="7.3,10.7 9,9.6 15,9.6 13.6,10.7" fill="#a8f8f8"/><rect x="13.6" y="10.7" width="1.6" height="7" fill="#108890"/><rect x="7.3" y="17.7" width="6.3" height="6.4" fill="#f410e4"/><rect x="16" y="14.2" width="7.3" height="13.3" fill="#e43410"/><polygon points="16,14.2 18,13 24.6,13 23.3,14.2" fill="#f87858"/><rect x="21.6" y="14.2" width="1.8" height="13.3" fill="#901c04"/><rect x="13.6" y="19.8" width="5.6" height="6.4" fill="#2410c4"/><polygon points="13.6,19.8 15,18.6 20.4,18.6 19.2,19.8" fill="#6858e8"/><polygon points="1,26 16.6,30.6 18.8,29 18.8,30 16.6,31.6 1,27" fill="#000"/><polygon points="23.3,27.5 18.6,29 18.6,30 23.4,28.4" fill="#000"/><line x1="23.4" y1="0" x2="31.6" y2="8" stroke="#e02810" stroke-width="2.6"/><line x1="23.4" y1="0" x2="31.6" y2="8" stroke="#fff" stroke-width="2.6" stroke-dasharray=".7 1.1"/><line x1="22.4" y1="1" x2="30.6" y2="9" stroke="#000" stroke-width="0.6"/><line x1="19.6" y1="9.4" x2="27.2" y2="15.4" stroke="#28d8e8" stroke-width="2.6"/><line x1="19.6" y1="9.4" x2="27.2" y2="15.4" stroke="#fff" stroke-width="2.6" stroke-dasharray=".7 1.1"/><rect x="26" y="17.6" width="6.7" height="3" fill="#2410a0"/></svg><div class="t"><span class="l"><span id="L45_0" style="letter-spacing:1.02px;margin-right:-1.02px">Defrag</span></span></div></div>
<div class="ic" style="left:0px;top:720px"><svg viewBox="0 0 32 32"><defs><linearGradient id="dl" x1="0" y1="0" x2="1" y2="1"><stop offset="0" stop-color="#90f4f8"/><stop offset=".45" stop-color="#30c4dc"/><stop offset="1" stop-color="#1888b8"/></linearGradient><clipPath id="dc"><rect x=".9" y="-.7" width="31.6" height="31.9"/></clipPath></defs><rect x="0.9" y="-0.7" width="31.6" height="31.9" fill="#10509c"/><g clip-path="url(#dc)"><path d="M1.8 5l5-3.6L14-.7h4l8.600000000000001 4 5 8.6 1.4 10v9.4H13.6l-1.200000000000001-9-2.6-7.4-4.6-5.2-3-1.6z" fill="url(#dl)"/><path d="M9 0l6 2 5 6 4 9 3 8 2 6.2h-4l-3-9-4-9-5-6.4L8 4z" fill="#c4fcfc" opacity=".55"/><path d="M22 27l6.4-4 4.100000000000001 5.2v3H25z" fill="#b0f4f8" opacity=".7"/><path d="M4.4 7.2c4 .6 8 1 12.6 1.2" fill="none" stroke="#083868" stroke-width="0.9"/><rect x="18.2" y="7.8" width="2.6" height="1.8" fill="#083868"/><path d="M13.6 31.2l-1.2-9-2.6-7.4L5 9.6" fill="none" stroke="#0c3c80" stroke-width="1.4"/></g><rect x="1.6" y="21.2" width="9.4" height="9.6" fill="#fff" stroke="#000" stroke-width="0.9"/><path d="M8.8 23.4H5.6l1.1 1.1c-1.600000000000001 1-2.4 2.6-2 4.6h1.4c-.2-1.400000000000002.4-2.6 1.6-3.4l1.1 1.1z" fill="#000"/></svg><div class="t"><span class="l"><span id="L46_0" style="letter-spacing:0.46px;margin-right:-0.46px">Totally not a</span></span><span class="l"><span id="L46_1" style="letter-spacing:0.81px;margin-right:-0.81px">virus.Trust</span></span><span class="l"><span id="L46_2" style="letter-spacing:-0.84px;margin-right:0.84px">me<span style="letter-spacing:-2.2px">...</span><span style="margin-left:2.2px"></span>im a</span></span><span class="l"><span id="L46_3" style="letter-spacing:-0.10px;margin-right:0.10px">dolphin</span></span></div></div>
<div class="ic" style="left:108px;top:720px"><svg viewBox="0 0 32 32"><path d="M9.8 .6h16l5.8 5.4V26.7H9.8z" fill="#fff" stroke="#000" stroke-width="0.9"/><rect x="10.2" y="25.2" width="21" height="1.4" fill="#b0b0b0"/><polygon points="25.8,0.6 31.6,6 25.8,6" fill="#b8b8b8" stroke="#000" stroke-width="0.7"/><path d="M13 7l2-1.200000000000001 2 1.600000000000001 3-1.6 1.6 1.8 3-1 .6 2.2 2.4.4-1.4 2.4 1.800000000000001 1.200000000000001-2.6 1.400000000000002-.8 3-1.6.6-.4 4.4h-2.2l-.6-2.6-2 .8-1 1.800000000000001-2-.2-1.6 1-1.400000000000002-1.200000000000001 2-1.8.2-2.4 1.6-2-.8-3.4-1.2-2.4 1.6-1.400000000000002z" fill="#f01414"/><rect x="17.4" y="11.6" width="1.2" height="1.2" fill="#fff"/><rect x="20.6" y="9.6" width="1.2" height="1.2" fill="#fff"/><rect x="19" y="15" width="1.2" height="1.2" fill="#fff"/><rect x="22" y="13" width="1" height="1" fill="#fff"/><rect x="15.6" y="18.6" width="1" height="1" fill="#fff"/><rect x="23.6" y="10.4" width="1" height="1" fill="#fff"/><path d="M6.2 -.4l3.2 5v25.6l-1 1H4l-1-1V4.6z" fill="#e41414" stroke="#000" stroke-width="0.9"/><rect x="7.6" y="5" width="1.8" height="25" fill="#900808"/><ellipse cx="5" cy="21.8" rx="1.7" ry="6.8" fill="#000"/><line x1="3.2" y1="8.4" x2="9.2" y2="8.4" stroke="#000" stroke-width="0.5"/><line x1="3.2" y1="29" x2="9.2" y2="29" stroke="#000" stroke-width="0.5"/></svg><div class="t"><span class="l"><span id="L47_0" style="letter-spacing:0.17px;margin-right:-0.17px">OLDEST GIF</span></span><span class="l"><span id="L47_1" style="letter-spacing:0.18px;margin-right:-0.18px">OF THE</span></span><span class="l"><span id="L47_2" style="letter-spacing:-0.14px;margin-right:0.14px">INTERWEBZ.</span></span><span class="l"><span id="L47_3" style="letter-spacing:0.30px;margin-right:-0.30px">gif</span></span></div></div>
<div class="ic" style="left:216px;top:720px"><svg viewBox="0 0 32 32"><rect x="2.9" y="6.8" width="19.9" height="13.7" fill="#fff" stroke="#000050" stroke-width="1.2"/><rect x="2.4" y="20" width="20.8" height="1.2" fill="#000050"/><rect x="17.9" y="8.7" width="2.9" height="2.7" fill="#d01010" stroke="#700000" stroke-width="0.5"/><rect x="7.8" y="12.5" width="8.2" height="0.8" fill="#2424c4"/><rect x="7.8" y="14.6" width="8.2" height="0.8" fill="#2424c4"/><rect x="7.8" y="16.6" width="8.2" height="0.8" fill="#2424c4"/><rect x="13" y="18.9" width="17.3" height="12.1" fill="#fff" stroke="#000050" stroke-width="1.2"/><rect x="16" y="21.6" width="12.6" height="0.8" fill="#b4b4b4"/><rect x="16" y="24.6" width="12.6" height="0.8" fill="#b4b4b4"/><rect x="16" y="27.6" width="4" height="0.8" fill="#b4b4b4"/><path d="M26.2 14.6l2.6 1.6-6.2 10.6-2.8 1.8.2-3.4z" fill="#f4e424" stroke="#000" stroke-width="0.8"/><path d="M26.2 14.6l1-1.8 2.6 1.6-1 1.8z" fill="#c81818"/><rect x="26.4" y="13.2" width="1.4" height="1" fill="#f8c0c8"/><path d="M20 25.4l-.2 3.2 2.6-1.6z" fill="#000"/><line x1="25" y1="17" x2="20.6" y2="25" stroke="#a89810" stroke-width="0.7"/></svg><div class="t"><span class="l"><span id="L48_0" style="letter-spacing:0.79px;margin-right:-0.79px">Contact us</span></span></div></div>
<div class="ic" style="left:324px;top:720px"><svg viewBox="0 0 32 32"><rect x="27.2" y="1.8" width="2.8" height="27.6" fill="#000"/><rect x="27.6" y="2.4" width="1.1" height="26.6" fill="#d0d0d0"/><rect x="4.4" y="29.6" width="24" height="1.6" fill="#8c8c8c"/><rect x="3.9" y="1.2" width="23.5" height="28.8" fill="#fff" stroke="#808080" stroke-width="0.8"/><rect x="3.9" y="1.2" width="23.5" height="0.8" fill="#000"/><rect x="4.9" y="-0.4" width="1.3" height="3.2" fill="#000"/><rect x="7.8" y="-0.4" width="1.3" height="3.2" fill="#000"/><rect x="10.7" y="-0.4" width="1.3" height="3.2" fill="#000"/><rect x="13.6" y="-0.4" width="1.3" height="3.2" fill="#000"/><rect x="16.5" y="-0.4" width="1.3" height="3.2" fill="#000"/><rect x="19.4" y="-0.4" width="1.3" height="3.2" fill="#000"/><rect x="22.3" y="-0.4" width="1.3" height="3.2" fill="#000"/><rect x="25.2" y="-0.4" width="1.3" height="3.2" fill="#000"/><rect x="6.2" y="6.8" width="5.9" height="0.75" fill="#000"/><rect x="6.2" y="8.8" width="5.9" height="0.75" fill="#000"/><rect x="18.9" y="6.6" width="1.6" height="0.75" fill="#000"/><rect x="21.2" y="6.6" width="2.6" height="0.75" fill="#000"/><rect x="6.2" y="12.7" width="5.9" height="0.75" fill="#000"/><rect x="6.2" y="15.6" width="17.6" height="1.4" fill="#000"/><rect x="6.2" y="17.8" width="17.6" height="1.4" fill="#000"/><rect x="6.2" y="19.8" width="17.6" height="1.1" fill="#000"/><rect x="6.2" y="21.5" width="17.6" height="1.4" fill="#000"/><rect x="6.2" y="24.7" width="5.9" height="0.75" fill="#000"/><rect x="6.2" y="26.7" width="5.9" height="0.75" fill="#000"/></svg><div class="t"><span class="l"><span id="L49_0" style="letter-spacing:0.96px;margin-right:-0.96px">Credits.txt</span></span></div></div>
<div class="ic" style="left:432px;top:720px"><svg viewBox="0 0 32 32"><path d="M5 14V6.9C6.4 2.6 10 -.3 14 -.3l7.9-.4c3.6.6 6.3 3 6.3 6.3v5.9c-.4 2-2.800000000000001 3-5.4 4.1v6.3l-10.3.9v-5.1c1-2 3.400000000000002-3.400000000000002 4.400000000000002-5v-2.9l-2.5-.8-2.3 1.6V14z" fill="#000" transform="translate(1.7 1.5)"/><path d="M5 14V6.9C6.4 2.6 10 -.3 14 -.3l7.9-.4c3.6.6 6.3 3 6.3 6.3v5.9c-.4 2-2.800000000000001 3-5.4 4.1v6.3l-10.3.9v-5.1c1-2 3.400000000000002-3.400000000000002 4.400000000000002-5v-2.9l-2.5-.8-2.3 1.6V14z" fill="#708820" transform="translate(1 .8)"/><path d="M5 14V6.9C6.4 2.6 10 -.3 14 -.3l7.9-.4c3.6.6 6.3 3 6.3 6.3v5.9c-.4 2-2.800000000000001 3-5.4 4.1v6.3l-10.3.9v-5.1c1-2 3.400000000000002-3.400000000000002 4.400000000000002-5v-2.9l-2.5-.8-2.3 1.6V14z" fill="#b8f020" stroke="#000" stroke-width="0.7"/><path d="M5.8 13V7.2C7 3.6 10.2 .8 14 .6" fill="none" stroke="#f0ffc0" stroke-width="1.2"/><path d="M13.4 21.6V18c1-1.8 3-3 4.2-4.6" fill="none" stroke="#f0ffc0" stroke-width="1"/><path d="M14.6 1.6h7c2 0 4.6 1.4 5.2 3.6" fill="none" stroke="#e0ffa0" stroke-width="1.3" stroke-dasharray="1 .8"/><rect x="13.8" y="26.4" width="10" height="5.8" fill="#000" rx="1.6"/><rect x="13.1" y="25.6" width="10" height="5.8" fill="#708820" rx="1.6"/><rect x="12.3" y="24.9" width="10" height="5.8" fill="#b8f020" rx="1.6" stroke="#000" stroke-width="0.7"/></svg><div class="t"><span class="l"><span id="L50_0" style="letter-spacing:-0.26px;margin-right:0.26px">MANIFESTO</span></span></div></div>
<div id="topline"></div></div>
<div id="bar"><div class="l1"></div><div class="l2"></div><div class="l3"></div>
<div id="start"><svg viewBox="0 0 28 22"><rect x="1.2" y="3.6" width="1.2" height="1.6" fill="#000"/><rect x="1.2" y="7" width="1.2" height="1.4" fill="#000"/><rect x="1.2" y="10.4" width="1.2" height="1.4" fill="#000"/><rect x="1.2" y="13.8" width="1.2" height="1.6" fill="#000"/><rect x="1.2" y="17" width="1.2" height="1.4" fill="#000"/><path d="M2.6 5.6l8-1.400000000000001v14.4l-8 1z" fill="#e8e8f0"/><path d="M1 7.2l10-1.6v4.6l-10 1z" fill="#48e8ec"/><path d="M1 11.6l10-1v4.4l-10 1.2z" fill="#f448e4"/><rect x="4" y="5" width="1.4" height="1" fill="#000"/><rect x="5.6" y="4.4" width="1.2" height="1" fill="#000"/><rect x="4.6" y="17.4" width="1.4" height="1" fill="#000"/><rect x="6.6" y="18.4" width="1.4" height="1.4" fill="#000"/><path d="M11 19.4V5.6C11 2.4 13.6 .6 18 .6s8.6 1.8 8.6 5V21l-3.4-2.6-2.4 1H15l-2 -.4-2.4 1z" fill="#000"/><path d="M14 16.4V6.2c0-2 1.600000000000001-3.2 4.2-3.2s4.6 1.2 4.6 3.2v10.2z" fill="#b4f424"/><rect x="15.6" y="5.6" width="1.5" height="2.4" fill="#000"/><rect x="19.8" y="5.6" width="1.5" height="2.4" fill="#000"/><path d="M15.2 10.4c.8 2.4 5.6 2.4 6.4 0" fill="none" stroke="#000" stroke-width="1.2"/></svg><b>Start</b></div>
<div id="tray"><svg viewBox="0 0 24 24"><defs><linearGradient id="rg" x1="0" y1="0" x2="1" y2="1"><stop offset="0" stop-color="#f88a28"/><stop offset=".5" stop-color="#f07010"/><stop offset="1" stop-color="#d85800"/></linearGradient></defs><rect x="0.4" y="0.4" width="23.2" height="23.2" fill="url(#rg)" rx="3.6" stroke="#b84c00" stroke-width=".8"/><circle cx="6.4" cy="17.8" r="1.9" fill="#fff"/><path d="M4.6 10.6c5 0 9 4 9 9" fill="none" stroke="#fff" stroke-width="2.6"/><path d="M4.6 5.4c8 0 14.2 6.2 14.2 14.2" fill="none" stroke="#fff" stroke-width="2.6"/></svg><span>10:01</span></div>
</div></body></html>
